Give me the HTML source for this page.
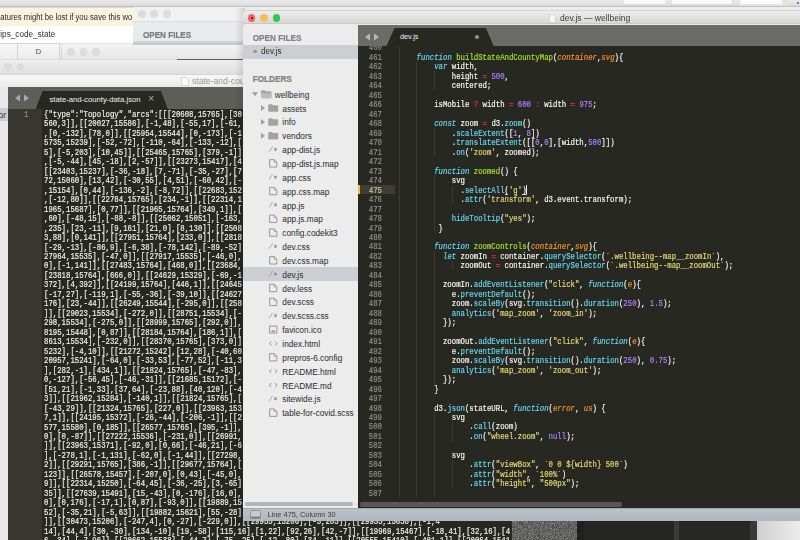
<!DOCTYPE html><html><head><meta charset="utf-8"><style>html,body{margin:0;padding:0;}body{width:800px;height:540px;overflow:hidden;position:relative;background:#ececec;}</style></head><body><div style="position:absolute;left:0px;top:0px;width:800px;height:7px;background:linear-gradient(#e9e9e9 0%,#e4e4e4 40%,#d6d6d6 90%);"></div>
<div style="position:absolute;left:739px;top:0px;width:49px;height:7px;background:#e3e3e3;"></div>
<div style="position:absolute;left:624px;top:0px;width:41px;height:3.5px;background:#fafafa;"></div>
<div style="position:absolute;left:672px;top:0px;width:61px;height:3.5px;background:#fafafa;"></div>
<div style="position:absolute;left:740px;top:0px;width:42px;height:3.5px;background:#fafafa;"></div>
<div style="position:absolute;left:732px;top:0px;width:1px;height:7px;background:#d6d6d6;"></div>
<div style="position:absolute;left:797px;top:2px;width:2px;height:2px;background:#4a90b8;"></div>
<div style="position:absolute;left:797px;top:5.5px;width:2px;height:1.5px;background:#4a90b8;"></div>
<div style="position:absolute;left:133px;top:6.5px;width:667px;height:4px;background:#ededed;"></div>
<div style="position:absolute;left:0px;top:5.8px;width:800px;height:1px;background:#c4c2bc;"></div>
<div style="position:absolute;left:0px;top:6.5px;width:133px;height:19.5px;background:#fcf3df;border-top:1px solid #e2dccc;box-sizing:border-box;"></div>
<div style="position:absolute;left:0.3px;top:11.5px;white-space:pre;font-family:'Liberation Sans',sans-serif;font-size:7.7px;line-height:12px;color:#2a2a2a;transform:scaleY(1.12);transform-origin:0 60%;">atures might be lost if you save this wo</div>
<div style="position:absolute;left:0px;top:26px;width:133px;height:17px;background:#ffffff;"></div>
<div style="position:absolute;left:-2px;top:29.1px;white-space:pre;font-family:'Liberation Sans',sans-serif;font-size:8.2px;line-height:12px;color:#303030;transform:scaleY(1.08);transform-origin:0 60%;">fips_code_state</div>
<div style="position:absolute;left:0px;top:42.5px;width:62px;height:1.5px;background:#d4d4d4;"></div>
<div style="position:absolute;left:0px;top:44px;width:62px;height:15.5px;background:linear-gradient(#f7f7f7,#ebebeb);"></div>
<div style="position:absolute;left:17px;top:44px;width:1px;height:15.5px;background:#d2d2d2;"></div>
<div style="position:absolute;left:58.5px;top:44px;width:1px;height:15.5px;background:#d2d2d2;"></div>
<div style="position:absolute;left:35.5px;top:46.5px;white-space:pre;font-family:'Liberation Sans',sans-serif;font-size:8px;line-height:10px;color:#555;">D</div>
<div style="position:absolute;left:62px;top:44px;width:181px;height:15.5px;background:linear-gradient(#f4f4f4,#e6e6e6);border-top-left-radius:4px;box-shadow:-1px 0 1.5px rgba(0,0,0,0.12);"></div>
<div style="position:absolute;left:67.2px;top:48.2px;width:7.6px;height:7.6px;border-radius:50%;background:#dcdcdc;"></div>
<div style="position:absolute;left:79.7px;top:48.2px;width:7.6px;height:7.6px;border-radius:50%;background:#dcdcdc;"></div>
<div style="position:absolute;left:92.2px;top:48.2px;width:7.6px;height:7.6px;border-radius:50%;background:#dcdcdc;"></div>
<div style="position:absolute;left:0px;top:58.5px;width:243px;height:1.5px;background:linear-gradient(#e2e2e2,#d4d4d4);"></div>
<div style="position:absolute;left:177px;top:59px;width:66px;height:1px;background:#5c5c5c;"></div>
<div style="position:absolute;left:133px;top:7px;width:110px;height:37.5px;background:#e9eaec;border-top-left-radius:4px;"></div>
<div style="position:absolute;left:133px;top:7px;width:110px;height:13.5px;background:#f1f1f1;border-top-left-radius:4px;border-bottom:1px solid #dddddd;"></div>
<div style="position:absolute;left:137.79999999999998px;top:10.1px;width:7.8px;height:7.8px;border-radius:50%;background:#dcdcdc;"></div>
<div style="position:absolute;left:150.29999999999998px;top:10.1px;width:7.8px;height:7.8px;border-radius:50%;background:#dcdcdc;"></div>
<div style="position:absolute;left:162.9px;top:10.1px;width:7.8px;height:7.8px;border-radius:50%;background:#dcdcdc;"></div>
<div style="position:absolute;left:143px;top:32px;white-space:pre;font-family:'Liberation Sans',sans-serif;font-size:8.1px;line-height:8px;font-weight:bold;color:#7a7a7a;transform:scaleY(1.15);transform-origin:0 70%;-webkit-text-stroke:0.2px #7a7a7a;">OPEN FILES</div>
<div style="position:absolute;left:133px;top:41px;width:110px;height:3.5px;background:linear-gradient(#d5d7da,#c3c6ca);"></div>
<div style="position:absolute;left:0px;top:60px;width:243px;height:13.5px;background:linear-gradient(#efefef,#dfdfdf);"></div>
<div style="position:absolute;left:4.0px;top:63.2px;width:7.6px;height:7.6px;border-radius:50%;background:#dcdcdc;"></div>
<div style="position:absolute;left:16.599999999999998px;top:63.2px;width:7.6px;height:7.6px;border-radius:50%;background:#dcdcdc;"></div>
<div style="position:absolute;left:0px;top:73.5px;width:243px;height:13.5px;background:linear-gradient(#f7f7f7,#ececec);border-top:1px solid #d6d6d6;box-sizing:border-box;"></div>
<svg style="position:absolute;left:181px;top:77px" width="8" height="9" viewBox="0 0 8 9"><path d="M0.5 0.5 H5 L7.5 3 V8.5 H0.5 Z" fill="#fbfbfb" stroke="#cfcfcf" stroke-width="0.8"/></svg>
<div style="position:absolute;left:192px;top:76px;white-space:pre;font-family:'Liberation Sans',sans-serif;font-size:8.6px;line-height:10px;color:#9a9a9a;">state-and-county-data.json</div>
<div style="position:absolute;left:0px;top:87px;width:8px;height:453px;background:#e8e8e8;"></div>
<div style="position:absolute;left:0px;top:108px;width:8px;height:13px;background:#cacdd2;"></div>
<div style="position:absolute;left:-1.5px;top:109.5px;white-space:pre;font-family:'Liberation Sans',sans-serif;font-size:8.5px;line-height:10px;color:#333;">or</div>
<div style="position:absolute;left:8px;top:87px;width:504px;height:453px;background:#272822;"></div>
<div style="position:absolute;left:8px;top:87px;width:504px;height:21.8px;background:#5d5e59;"></div>
<svg style="position:absolute;left:14px;top:94px" width="16" height="8" viewBox="0 0 16 8"><path d="M6 0.5 L1 4 L6 7.5 Z" fill="#a9a9a6"/><path d="M10 0.5 L15 4 L10 7.5 Z" fill="#a9a9a6"/></svg>
<svg style="position:absolute;left:35px;top:91px" width="134" height="18" viewBox="0 0 134 18"><path d="M0.5 18.5 L7.5 0 H126 L133 18.5 Z" fill="#272822"/></svg>
<div style="position:absolute;left:49.5px;top:95px;white-space:pre;font-family:'Liberation Sans',sans-serif;font-size:7.7px;line-height:10px;color:#f2f2f2;">state-and-county-data.json</div>
<div style="position:absolute;left:148.3px;top:94.3px;white-space:pre;font-family:'Liberation Sans',sans-serif;font-size:10px;line-height:10px;color:#b0b0ac;">×</div>
<div style="position:absolute;left:8px;top:109px;width:33.5px;height:431px;background:#38372f;"></div>
<div style="position:absolute;left:24px;top:110.86999999999999px;font-family:'Liberation Mono',monospace;font-size:7.33px;line-height:9.46px;white-space:pre;color:#8f908a;transform:scaleY(1.15);transform-origin:0 70%;will-change:transform;-webkit-text-stroke:0.15px currentColor;">1</div>
<div style="position:absolute;left:44px;top:110.86999999999999px;font-family:'Liberation Mono',monospace;font-size:7.33px;line-height:9.46px;white-space:pre;color:#f2f2ec;transform:scaleY(1.15);transform-origin:0 70%;will-change:transform;-webkit-text-stroke:0.15px currentColor;">{&quot;type&quot;:&quot;Topology&quot;,&quot;arcs&quot;:[[[20608,15765],[30</div>
<div style="position:absolute;left:44px;top:120.34499999999998px;font-family:'Liberation Mono',monospace;font-size:7.33px;line-height:9.46px;white-space:pre;color:#f2f2ec;transform:scaleY(1.15);transform-origin:0 70%;will-change:transform;-webkit-text-stroke:0.15px currentColor;">560,3]],[[20027,15586],[-1,48],[-55,17],[-61,</div>
<div style="position:absolute;left:44px;top:129.82000000000002px;font-family:'Liberation Mono',monospace;font-size:7.33px;line-height:9.46px;white-space:pre;color:#f2f2ec;transform:scaleY(1.15);transform-origin:0 70%;will-change:transform;-webkit-text-stroke:0.15px currentColor;">,[0,-132],[78,0]],[[25954,15544],[0,-173],[-1</div>
<div style="position:absolute;left:44px;top:139.29500000000002px;font-family:'Liberation Mono',monospace;font-size:7.33px;line-height:9.46px;white-space:pre;color:#f2f2ec;transform:scaleY(1.15);transform-origin:0 70%;will-change:transform;-webkit-text-stroke:0.15px currentColor;">5735,15239],[-52,-72],[-110,-64],[-133,-12],[</div>
<div style="position:absolute;left:44px;top:148.77px;font-family:'Liberation Mono',monospace;font-size:7.33px;line-height:9.46px;white-space:pre;color:#f2f2ec;transform:scaleY(1.15);transform-origin:0 70%;will-change:transform;-webkit-text-stroke:0.15px currentColor;">5],[-5,203],[10,45]],[[25465,15765],[379,-1]]</div>
<div style="position:absolute;left:44px;top:158.24500000000003px;font-family:'Liberation Mono',monospace;font-size:7.33px;line-height:9.46px;white-space:pre;color:#f2f2ec;transform:scaleY(1.15);transform-origin:0 70%;will-change:transform;-webkit-text-stroke:0.15px currentColor;">,[-5,-44],[45,-18],[2,-57]],[[23273,15417],[4</div>
<div style="position:absolute;left:44px;top:167.72px;font-family:'Liberation Mono',monospace;font-size:7.33px;line-height:9.46px;white-space:pre;color:#f2f2ec;transform:scaleY(1.15);transform-origin:0 70%;will-change:transform;-webkit-text-stroke:0.15px currentColor;">[[23403,15237],[-36,-18],[7,-71],[-35,-27],[7</div>
<div style="position:absolute;left:44px;top:177.19500000000002px;font-family:'Liberation Mono',monospace;font-size:7.33px;line-height:9.46px;white-space:pre;color:#f2f2ec;transform:scaleY(1.15);transform-origin:0 70%;will-change:transform;-webkit-text-stroke:0.15px currentColor;">72,15060],[13,42],[-30,55],[4,51],[-60,42],[-</div>
<div style="position:absolute;left:44px;top:186.67000000000002px;font-family:'Liberation Mono',monospace;font-size:7.33px;line-height:9.46px;white-space:pre;color:#f2f2ec;transform:scaleY(1.15);transform-origin:0 70%;will-change:transform;-webkit-text-stroke:0.15px currentColor;">,15154],[0,44],[-136,-2],[-8,72]],[[22683,152</div>
<div style="position:absolute;left:44px;top:196.145px;font-family:'Liberation Mono',monospace;font-size:7.33px;line-height:9.46px;white-space:pre;color:#f2f2ec;transform:scaleY(1.15);transform-origin:0 70%;will-change:transform;-webkit-text-stroke:0.15px currentColor;">,[-12,80]],[[22784,15765],[234,-1]],[[22314,1</div>
<div style="position:absolute;left:44px;top:205.62000000000003px;font-family:'Liberation Mono',monospace;font-size:7.33px;line-height:9.46px;white-space:pre;color:#f2f2ec;transform:scaleY(1.15);transform-origin:0 70%;will-change:transform;-webkit-text-stroke:0.15px currentColor;">1965,15687],[0,77]],[[21965,15764],[349,1]],[</div>
<div style="position:absolute;left:44px;top:215.095px;font-family:'Liberation Mono',monospace;font-size:7.33px;line-height:9.46px;white-space:pre;color:#f2f2ec;transform:scaleY(1.15);transform-origin:0 70%;will-change:transform;-webkit-text-stroke:0.15px currentColor;">,60],[-48,15],[-88,-8]],[[25062,15051],[-163,</div>
<div style="position:absolute;left:44px;top:224.57000000000002px;font-family:'Liberation Mono',monospace;font-size:7.33px;line-height:9.46px;white-space:pre;color:#f2f2ec;transform:scaleY(1.15);transform-origin:0 70%;will-change:transform;-webkit-text-stroke:0.15px currentColor;">,235],[23,-11],[9,161],[21,0],[8,130]],[[2508</div>
<div style="position:absolute;left:44px;top:234.04500000000002px;font-family:'Liberation Mono',monospace;font-size:7.33px;line-height:9.46px;white-space:pre;color:#f2f2ec;transform:scaleY(1.15);transform-origin:0 70%;will-change:transform;-webkit-text-stroke:0.15px currentColor;">3,88],[0,141]],[[27951,15764],[233,0]],[[2818</div>
<div style="position:absolute;left:44px;top:243.52px;font-family:'Liberation Mono',monospace;font-size:7.33px;line-height:9.46px;white-space:pre;color:#f2f2ec;transform:scaleY(1.15);transform-origin:0 70%;will-change:transform;-webkit-text-stroke:0.15px currentColor;">[-29,-13],[-86,9],[-6,38],[-78,142],[-89,-52]</div>
<div style="position:absolute;left:44px;top:252.99500000000003px;font-family:'Liberation Mono',monospace;font-size:7.33px;line-height:9.46px;white-space:pre;color:#f2f2ec;transform:scaleY(1.15);transform-origin:0 70%;will-change:transform;-webkit-text-stroke:0.15px currentColor;">27964,15535],[-47,0]],[[27917,15535],[-46,0],</div>
<div style="position:absolute;left:44px;top:262.46999999999997px;font-family:'Liberation Mono',monospace;font-size:7.33px;line-height:9.46px;white-space:pre;color:#f2f2ec;transform:scaleY(1.15);transform-origin:0 70%;will-change:transform;-webkit-text-stroke:0.15px currentColor;">0],[-1,141]],[[27483,15764],[468,0]],[[23684,</div>
<div style="position:absolute;left:44px;top:271.945px;font-family:'Liberation Mono',monospace;font-size:7.33px;line-height:9.46px;white-space:pre;color:#f2f2ec;transform:scaleY(1.15);transform-origin:0 70%;will-change:transform;-webkit-text-stroke:0.15px currentColor;">[23818,15764],[666,0]],[[24629,15329],[-69,-1</div>
<div style="position:absolute;left:44px;top:281.41999999999996px;font-family:'Liberation Mono',monospace;font-size:7.33px;line-height:9.46px;white-space:pre;color:#f2f2ec;transform:scaleY(1.15);transform-origin:0 70%;will-change:transform;-webkit-text-stroke:0.15px currentColor;">372],[4,392]],[[24199,15764],[446,1]],[[24645</div>
<div style="position:absolute;left:44px;top:290.895px;font-family:'Liberation Mono',monospace;font-size:7.33px;line-height:9.46px;white-space:pre;color:#f2f2ec;transform:scaleY(1.15);transform-origin:0 70%;will-change:transform;-webkit-text-stroke:0.15px currentColor;">[-17,27],[-119,1],[-55,-36],[-39,10]],[[24627</div>
<div style="position:absolute;left:44px;top:300.37px;font-family:'Liberation Mono',monospace;font-size:7.33px;line-height:9.46px;white-space:pre;color:#f2f2ec;transform:scaleY(1.15);transform-origin:0 70%;will-change:transform;-webkit-text-stroke:0.15px currentColor;">176],[23,-44]],[[26249,15544],[-295,0]],[[258</div>
<div style="position:absolute;left:44px;top:309.84499999999997px;font-family:'Liberation Mono',monospace;font-size:7.33px;line-height:9.46px;white-space:pre;color:#f2f2ec;transform:scaleY(1.15);transform-origin:0 70%;will-change:transform;-webkit-text-stroke:0.15px currentColor;">]],[[29023,15534],[-272,0]],[[28751,15534],[-</div>
<div style="position:absolute;left:44px;top:319.32px;font-family:'Liberation Mono',monospace;font-size:7.33px;line-height:9.46px;white-space:pre;color:#f2f2ec;transform:scaleY(1.15);transform-origin:0 70%;will-change:transform;-webkit-text-stroke:0.15px currentColor;">298,15534],[-275,0]],[[28999,15765],[292,0]],[</div>
<div style="position:absolute;left:44px;top:328.79499999999996px;font-family:'Liberation Mono',monospace;font-size:7.33px;line-height:9.46px;white-space:pre;color:#f2f2ec;transform:scaleY(1.15);transform-origin:0 70%;will-change:transform;-webkit-text-stroke:0.15px currentColor;">8195,15448],[0,87]],[[28184,15764],[186,1]],[</div>
<div style="position:absolute;left:44px;top:338.27px;font-family:'Liberation Mono',monospace;font-size:7.33px;line-height:9.46px;white-space:pre;color:#f2f2ec;transform:scaleY(1.15);transform-origin:0 70%;will-change:transform;-webkit-text-stroke:0.15px currentColor;">8613,15534],[-232,0]],[[28370,15765],[373,0]]</div>
<div style="position:absolute;left:44px;top:347.745px;font-family:'Liberation Mono',monospace;font-size:7.33px;line-height:9.46px;white-space:pre;color:#f2f2ec;transform:scaleY(1.15);transform-origin:0 70%;will-change:transform;-webkit-text-stroke:0.15px currentColor;">5232],[-4,10]],[[21272,15242],[12,28],[-40,60</div>
<div style="position:absolute;left:44px;top:357.21999999999997px;font-family:'Liberation Mono',monospace;font-size:7.33px;line-height:9.46px;white-space:pre;color:#f2f2ec;transform:scaleY(1.15);transform-origin:0 70%;will-change:transform;-webkit-text-stroke:0.15px currentColor;">20957,15241],[-64,0],[-33,53],[-77,52],[-11,3</div>
<div style="position:absolute;left:44px;top:366.695px;font-family:'Liberation Mono',monospace;font-size:7.33px;line-height:9.46px;white-space:pre;color:#f2f2ec;transform:scaleY(1.15);transform-origin:0 70%;will-change:transform;-webkit-text-stroke:0.15px currentColor;">],[282,-1],[434,1]],[[21824,15765],[-47,-83],[</div>
<div style="position:absolute;left:44px;top:376.17px;font-family:'Liberation Mono',monospace;font-size:7.33px;line-height:9.46px;white-space:pre;color:#f2f2ec;transform:scaleY(1.15);transform-origin:0 70%;will-change:transform;-webkit-text-stroke:0.15px currentColor;">0,-127],[-56,45],[-46,-31]],[[21685,15172],[-</div>
<div style="position:absolute;left:44px;top:385.645px;font-family:'Liberation Mono',monospace;font-size:7.33px;line-height:9.46px;white-space:pre;color:#f2f2ec;transform:scaleY(1.15);transform-origin:0 70%;will-change:transform;-webkit-text-stroke:0.15px currentColor;">[51,21],[-1,33],[37,64],[-23,88],[40,120],[-4</div>
<div style="position:absolute;left:44px;top:395.12px;font-family:'Liberation Mono',monospace;font-size:7.33px;line-height:9.46px;white-space:pre;color:#f2f2ec;transform:scaleY(1.15);transform-origin:0 70%;will-change:transform;-webkit-text-stroke:0.15px currentColor;">3]],[[21962,15284],[-140,1]],[[21824,15765],[</div>
<div style="position:absolute;left:44px;top:404.59499999999997px;font-family:'Liberation Mono',monospace;font-size:7.33px;line-height:9.46px;white-space:pre;color:#f2f2ec;transform:scaleY(1.15);transform-origin:0 70%;will-change:transform;-webkit-text-stroke:0.15px currentColor;">[-43,29]],[[21324,15765],[227,0]],[[23963,153</div>
<div style="position:absolute;left:44px;top:414.07px;font-family:'Liberation Mono',monospace;font-size:7.33px;line-height:9.46px;white-space:pre;color:#f2f2ec;transform:scaleY(1.15);transform-origin:0 70%;will-change:transform;-webkit-text-stroke:0.15px currentColor;">7,1]],[[24195,15372],[-26,-44],[-206,-1]],[[2</div>
<div style="position:absolute;left:44px;top:423.545px;font-family:'Liberation Mono',monospace;font-size:7.33px;line-height:9.46px;white-space:pre;color:#f2f2ec;transform:scaleY(1.15);transform-origin:0 70%;will-change:transform;-webkit-text-stroke:0.15px currentColor;">577,15580],[0,185]],[[26577,15765],[395,-1]],</div>
<div style="position:absolute;left:44px;top:433.02px;font-family:'Liberation Mono',monospace;font-size:7.33px;line-height:9.46px;white-space:pre;color:#f2f2ec;transform:scaleY(1.15);transform-origin:0 70%;will-change:transform;-webkit-text-stroke:0.15px currentColor;">0],[0,-87]],[[27222,15536],[-231,0]],[[26991,</div>
<div style="position:absolute;left:44px;top:442.495px;font-family:'Liberation Mono',monospace;font-size:7.33px;line-height:9.46px;white-space:pre;color:#f2f2ec;transform:scaleY(1.15);transform-origin:0 70%;will-change:transform;-webkit-text-stroke:0.15px currentColor;">]],[[23963,15371],[-92,0],[0,66],[-46,21],[-6</div>
<div style="position:absolute;left:44px;top:451.96999999999997px;font-family:'Liberation Mono',monospace;font-size:7.33px;line-height:9.46px;white-space:pre;color:#f2f2ec;transform:scaleY(1.15);transform-origin:0 70%;will-change:transform;-webkit-text-stroke:0.15px currentColor;">],[-278,1],[-1,131],[-62,0],[-1,44]],[[27298,</div>
<div style="position:absolute;left:44px;top:461.445px;font-family:'Liberation Mono',monospace;font-size:7.33px;line-height:9.46px;white-space:pre;color:#f2f2ec;transform:scaleY(1.15);transform-origin:0 70%;will-change:transform;-webkit-text-stroke:0.15px currentColor;">2]],[[29291,15765],[386,-1]],[[29677,15764],[</div>
<div style="position:absolute;left:44px;top:470.92px;font-family:'Liberation Mono',monospace;font-size:7.33px;line-height:9.46px;white-space:pre;color:#f2f2ec;transform:scaleY(1.15);transform-origin:0 70%;will-change:transform;-webkit-text-stroke:0.15px currentColor;">123]],[[26578,15457],[-207,0],[0,43],[-45,0],</div>
<div style="position:absolute;left:44px;top:480.395px;font-family:'Liberation Mono',monospace;font-size:7.33px;line-height:9.46px;white-space:pre;color:#f2f2ec;transform:scaleY(1.15);transform-origin:0 70%;will-change:transform;-webkit-text-stroke:0.15px currentColor;">9]],[[22314,15250],[-64,45],[-36,-25],[3,-65]</div>
<div style="position:absolute;left:44px;top:489.87px;font-family:'Liberation Mono',monospace;font-size:7.33px;line-height:9.46px;white-space:pre;color:#f2f2ec;transform:scaleY(1.15);transform-origin:0 70%;will-change:transform;-webkit-text-stroke:0.15px currentColor;">35]],[[27639,15491],[15,-43],[0,-176],[16,0],</div>
<div style="position:absolute;left:44px;top:499.34499999999997px;font-family:'Liberation Mono',monospace;font-size:7.33px;line-height:9.46px;white-space:pre;color:#f2f2ec;transform:scaleY(1.15);transform-origin:0 70%;will-change:transform;-webkit-text-stroke:0.15px currentColor;">0],[0,176],[-17,1],[0,87],[-93,0]],[[19889,15</div>
<div style="position:absolute;left:44px;top:508.82px;font-family:'Liberation Mono',monospace;font-size:7.33px;line-height:9.46px;white-space:pre;color:#f2f2ec;transform:scaleY(1.15);transform-origin:0 70%;will-change:transform;-webkit-text-stroke:0.15px currentColor;">52],[-35,21],[-5,63]],[[19882,15621],[55,-28]</div>
<div style="position:absolute;left:44px;top:518.295px;font-family:'Liberation Mono',monospace;font-size:7.33px;line-height:9.46px;white-space:pre;color:#f2f2ec;transform:scaleY(1.15);transform-origin:0 70%;will-change:transform;-webkit-text-stroke:0.15px currentColor;">]],[[30473,15206],[-247,4],[0,-27],[-229,0]],[[29955,15206],[-5,203]],[[29955,15638],[-1,4</div>
<div style="position:absolute;left:44px;top:527.7699999999999px;font-family:'Liberation Mono',monospace;font-size:7.33px;line-height:9.46px;white-space:pre;color:#f2f2ec;transform:scaleY(1.15);transform-origin:0 70%;will-change:transform;-webkit-text-stroke:0.15px currentColor;">14],[44,4],[30,-30],[134,-10],[19,-58],[115,16],[1,22],[92,26],[42,-7]],[[19969,15467],[-18,41],[32,16],[4</div>
<div style="position:absolute;left:44px;top:537.2449999999999px;font-family:'Liberation Mono',monospace;font-size:7.33px;line-height:9.46px;white-space:pre;color:#f2f2ec;transform:scaleY(1.15);transform-origin:0 70%;will-change:transform;-webkit-text-stroke:0.15px currentColor;">6,-34],[-7,96]],[[20662,15538],[-44,7],[-75,-25],[-12,-80],[34,-11]],[[20555,15410],[-401,1]],[[20064,1541</div>
<div style="position:absolute;left:512px;top:521px;width:65px;height:19px;background:#4b4b49;"></div>
<svg style="position:absolute;left:512px;top:521px" width="65" height="19"><filter id="nz"><feTurbulence type="fractalNoise" baseFrequency="1.2" numOctaves="1" seed="3"/><feColorMatrix type="matrix" values="0 0 0 0 0.5  0 0 0 0 0.5  0 0 0 0 0.5  0.9 0.9 0.9 0 -1.15"/></filter><rect width="65" height="19" filter="url(#nz)"/></svg>
<div style="position:absolute;left:577px;top:521px;width:180px;height:19px;background:#20211e;"></div>
<div style="position:absolute;left:584px;top:522px;width:90px;height:18px;background:#262723;"></div>
<div style="position:absolute;left:674px;top:521px;width:5px;height:19px;background:#3a3a37;"></div>
<div style="position:absolute;left:679px;top:522px;width:71px;height:18px;background:#272824;"></div>
<div style="position:absolute;left:750px;top:521px;width:7px;height:19px;background:#3a3a38;"></div>
<div style="position:absolute;left:757px;top:521px;width:43px;height:19px;background:linear-gradient(90deg,#cfcfcf,#ececec);"></div>
<div style="position:absolute;left:235px;top:8px;width:10px;height:515px;background:linear-gradient(90deg,rgba(0,0,0,0),rgba(0,0,0,0.12));"></div>
<div style="position:absolute;left:243px;top:10.3px;width:557px;height:14.2px;background:linear-gradient(#ededed,#d8d8d8);border-top-left-radius:4px;border-top:0.8px solid #d2d2d2;border-bottom:1px solid #c9c9c9;box-sizing:border-box;"></div>
<div style="position:absolute;left:247.6px;top:13.999999999999998px;width:7.8px;height:7.8px;border-radius:50%;background:#fc605c;"></div>
<div style="position:absolute;left:250.6px;top:16.6px;width:2.0px;height:2.0px;border-radius:50%;background:#5a0c0c;"></div>
<div style="position:absolute;left:260.1px;top:13.999999999999998px;width:7.8px;height:7.8px;border-radius:50%;background:#f7bf4f;"></div>
<div style="position:absolute;left:272.6px;top:13.999999999999998px;width:7.8px;height:7.8px;border-radius:50%;background:#35c84a;"></div>
<svg style="position:absolute;left:548.5px;top:14px" width="7" height="9" viewBox="0 0 7 9"><path d="M0.5 0.5 H4.5 L6.5 2.5 V8.5 H0.5 Z" fill="#f8f8f8" stroke="#c8c8c8" stroke-width="0.7"/></svg>
<div style="position:absolute;left:560px;top:13.3px;white-space:pre;font-family:'Liberation Sans',sans-serif;font-size:8.5px;line-height:10px;color:#3c3c3c;">dev.js — wellbeing</div>
<div style="position:absolute;left:243px;top:24.5px;width:115px;height:484px;background:#ececed;"></div>
<div style="position:absolute;left:252.7px;top:34.5px;white-space:pre;font-family:'Liberation Sans',sans-serif;font-size:8.2px;line-height:8px;font-weight:bold;color:#828282;transform:scaleY(1.15);transform-origin:0 70%;-webkit-text-stroke:0.2px #828282;">OPEN FILES</div>
<div style="position:absolute;left:243px;top:45px;width:115px;height:13.5px;background:#cbced3;"></div>
<div style="position:absolute;left:253.3px;top:50.099999999999994px;width:3.4px;height:3.4px;border-radius:50%;background:#959595;"></div>
<div style="position:absolute;left:261px;top:47px;white-space:pre;font-family:'Liberation Sans',sans-serif;font-size:8.1px;line-height:10px;color:#2b2b2b;transform:scaleY(1.06);transform-origin:0 60%;">dev.js</div>
<div style="position:absolute;left:252.7px;top:76px;white-space:pre;font-family:'Liberation Sans',sans-serif;font-size:8.2px;line-height:8px;font-weight:bold;color:#828282;transform:scaleY(1.15);transform-origin:0 70%;-webkit-text-stroke:0.2px #828282;">FOLDERS</div>
<div style="position:absolute;left:274.7px;top:89.7px;white-space:pre;font-family:'Liberation Sans',sans-serif;font-size:8.3px;line-height:10px;color:#2b2b2b;transform:scaleY(1.06);transform-origin:0 60%;">wellbeing</div>
<div style="position:absolute;left:282.3px;top:103.55px;white-space:pre;font-family:'Liberation Sans',sans-serif;font-size:8.3px;line-height:10px;color:#2b2b2b;transform:scaleY(1.06);transform-origin:0 60%;">assets</div>
<div style="position:absolute;left:282.3px;top:117.4px;white-space:pre;font-family:'Liberation Sans',sans-serif;font-size:8.3px;line-height:10px;color:#2b2b2b;transform:scaleY(1.06);transform-origin:0 60%;">info</div>
<div style="position:absolute;left:282.3px;top:131.25px;white-space:pre;font-family:'Liberation Sans',sans-serif;font-size:8.3px;line-height:10px;color:#2b2b2b;transform:scaleY(1.06);transform-origin:0 60%;">vendors</div>
<div style="position:absolute;left:282.3px;top:145.1px;white-space:pre;font-family:'Liberation Sans',sans-serif;font-size:8.3px;line-height:10px;color:#2b2b2b;transform:scaleY(1.06);transform-origin:0 60%;">app-dist.js</div>
<div style="position:absolute;left:282.3px;top:158.95px;white-space:pre;font-family:'Liberation Sans',sans-serif;font-size:8.3px;line-height:10px;color:#2b2b2b;transform:scaleY(1.06);transform-origin:0 60%;">app-dist.js.map</div>
<div style="position:absolute;left:282.3px;top:172.8px;white-space:pre;font-family:'Liberation Sans',sans-serif;font-size:8.3px;line-height:10px;color:#2b2b2b;transform:scaleY(1.06);transform-origin:0 60%;">app.css</div>
<div style="position:absolute;left:282.3px;top:186.65px;white-space:pre;font-family:'Liberation Sans',sans-serif;font-size:8.3px;line-height:10px;color:#2b2b2b;transform:scaleY(1.06);transform-origin:0 60%;">app.css.map</div>
<div style="position:absolute;left:282.3px;top:200.5px;white-space:pre;font-family:'Liberation Sans',sans-serif;font-size:8.3px;line-height:10px;color:#2b2b2b;transform:scaleY(1.06);transform-origin:0 60%;">app.js</div>
<div style="position:absolute;left:282.3px;top:214.35px;white-space:pre;font-family:'Liberation Sans',sans-serif;font-size:8.3px;line-height:10px;color:#2b2b2b;transform:scaleY(1.06);transform-origin:0 60%;">app.js.map</div>
<div style="position:absolute;left:282.3px;top:228.2px;white-space:pre;font-family:'Liberation Sans',sans-serif;font-size:8.3px;line-height:10px;color:#2b2b2b;transform:scaleY(1.06);transform-origin:0 60%;">config.codekit3</div>
<div style="position:absolute;left:282.3px;top:242.05px;white-space:pre;font-family:'Liberation Sans',sans-serif;font-size:8.3px;line-height:10px;color:#2b2b2b;transform:scaleY(1.06);transform-origin:0 60%;">dev.css</div>
<div style="position:absolute;left:282.3px;top:255.89999999999998px;white-space:pre;font-family:'Liberation Sans',sans-serif;font-size:8.3px;line-height:10px;color:#2b2b2b;transform:scaleY(1.06);transform-origin:0 60%;">dev.css.map</div>
<div style="position:absolute;left:243px;top:267.45px;width:115px;height:13.5px;background:#cbced3;"></div>
<div style="position:absolute;left:282.3px;top:269.75px;white-space:pre;font-family:'Liberation Sans',sans-serif;font-size:8.3px;line-height:10px;color:#2b2b2b;transform:scaleY(1.06);transform-origin:0 60%;">dev.js</div>
<div style="position:absolute;left:282.3px;top:283.6px;white-space:pre;font-family:'Liberation Sans',sans-serif;font-size:8.3px;line-height:10px;color:#2b2b2b;transform:scaleY(1.06);transform-origin:0 60%;">dev.less</div>
<div style="position:absolute;left:282.3px;top:297.45px;white-space:pre;font-family:'Liberation Sans',sans-serif;font-size:8.3px;line-height:10px;color:#2b2b2b;transform:scaleY(1.06);transform-origin:0 60%;">dev.scss</div>
<div style="position:absolute;left:282.3px;top:311.3px;white-space:pre;font-family:'Liberation Sans',sans-serif;font-size:8.3px;line-height:10px;color:#2b2b2b;transform:scaleY(1.06);transform-origin:0 60%;">dev.scss.css</div>
<div style="position:absolute;left:282.3px;top:325.15px;white-space:pre;font-family:'Liberation Sans',sans-serif;font-size:8.3px;line-height:10px;color:#2b2b2b;transform:scaleY(1.06);transform-origin:0 60%;">favicon.ico</div>
<div style="position:absolute;left:282.3px;top:339.0px;white-space:pre;font-family:'Liberation Sans',sans-serif;font-size:8.3px;line-height:10px;color:#2b2b2b;transform:scaleY(1.06);transform-origin:0 60%;">index.html</div>
<div style="position:absolute;left:282.3px;top:352.84999999999997px;white-space:pre;font-family:'Liberation Sans',sans-serif;font-size:8.3px;line-height:10px;color:#2b2b2b;transform:scaleY(1.06);transform-origin:0 60%;">prepros-6.config</div>
<div style="position:absolute;left:282.3px;top:366.7px;white-space:pre;font-family:'Liberation Sans',sans-serif;font-size:8.3px;line-height:10px;color:#2b2b2b;transform:scaleY(1.06);transform-origin:0 60%;">README.html</div>
<div style="position:absolute;left:282.3px;top:380.54999999999995px;white-space:pre;font-family:'Liberation Sans',sans-serif;font-size:8.3px;line-height:10px;color:#2b2b2b;transform:scaleY(1.06);transform-origin:0 60%;">README.md</div>
<div style="position:absolute;left:282.3px;top:394.4px;white-space:pre;font-family:'Liberation Sans',sans-serif;font-size:8.3px;line-height:10px;color:#2b2b2b;transform:scaleY(1.06);transform-origin:0 60%;">sitewide.js</div>
<div style="position:absolute;left:282.3px;top:408.25px;white-space:pre;font-family:'Liberation Sans',sans-serif;font-size:8.3px;line-height:10px;color:#2b2b2b;transform:scaleY(1.06);transform-origin:0 60%;">table-for-covid.scss</div>
<svg style="position:absolute;left:0;top:0" width="800" height="540" viewBox="0 0 800 540"><path d="M252 92.2 H258 L255 96.2 Z" fill="#a0a0a0"/><path d="M261 91.2 Q261 90.2 262 90.2 H264.8 L265.8 91.2 H270.5 Q271.5 91.2 271.5 92.2 V97.4 Q271.5 98.2 270.5 98.2 H262 Q261 98.2 261 97.4 Z" fill="#a6a6a6"/><path d="M261 93.2 H271.5 V97.4 Q271.5 98.2 270.5 98.2 H262 Q261 98.2 261 97.4 Z" fill="#bdbdbd"/><path d="M261 105.05 V111.05 L265 108.05 Z" fill="#a0a0a0"/><path d="M268.2 105.3 Q268.2 104.3 269.2 104.3 H272.0 L273.0 105.3 H277.2 Q278.2 105.3 278.2 106.3 V111.0 Q278.2 111.8 277.2 111.8 H269.2 Q268.2 111.8 268.2 111.0 Z" fill="#a2a2a2"/><path d="M261 118.9 V124.9 L265 121.9 Z" fill="#a0a0a0"/><path d="M268.2 119.15 Q268.2 118.15 269.2 118.15 H272.0 L273.0 119.15 H277.2 Q278.2 119.15 278.2 120.15 V124.85000000000001 Q278.2 125.65 277.2 125.65 H269.2 Q268.2 125.65 268.2 124.85000000000001 Z" fill="#a2a2a2"/><path d="M261 132.75 V138.75 L265 135.75 Z" fill="#a0a0a0"/><path d="M268.2 133.0 Q268.2 132.0 269.2 132.0 H272.0 L273.0 133.0 H277.2 Q278.2 133.0 278.2 134.0 V138.7 Q278.2 139.5 277.2 139.5 H269.2 Q268.2 139.5 268.2 138.7 Z" fill="#a2a2a2"/><path d="M269.2 151.79999999999998 L272.59999999999997 146.4" stroke="#9a9a9a" stroke-width="0.8" fill="none"/><path d="M273.9 148.4 L277.1 150.4 M273.9 150.4 L277.1 148.4 M275.5 147.8 V151.0" stroke="#8a8a8a" stroke-width="0.8" fill="none"/><path d="M269.65 159.64999999999998 H274.2 L276.8 162.24999999999997 V167.04999999999998 H269.65 Z" fill="none" stroke="#8e8e8e" stroke-width="0.9"/><path d="M274.2 159.64999999999998 V162.24999999999997 H276.8" fill="none" stroke="#8e8e8e" stroke-width="0.7"/><path d="M269.2 179.5 L272.59999999999997 174.10000000000002" stroke="#9a9a9a" stroke-width="0.8" fill="none"/><path d="M273.9 176.10000000000002 L277.1 178.10000000000002 M273.9 178.10000000000002 L277.1 176.10000000000002 M275.5 175.50000000000003 V178.70000000000002" stroke="#8a8a8a" stroke-width="0.8" fill="none"/><path d="M269.65 187.35 H274.2 L276.8 189.95 V194.75 H269.65 Z" fill="none" stroke="#8e8e8e" stroke-width="0.9"/><path d="M274.2 187.35 V189.95 H276.8" fill="none" stroke="#8e8e8e" stroke-width="0.7"/><path d="M269.2 207.2 L272.59999999999997 201.8" stroke="#9a9a9a" stroke-width="0.8" fill="none"/><path d="M273.9 203.8 L277.1 205.8 M273.9 205.8 L277.1 203.8 M275.5 203.20000000000002 V206.4" stroke="#8a8a8a" stroke-width="0.8" fill="none"/><path d="M269.65 215.04999999999998 H274.2 L276.8 217.64999999999998 V222.45 H269.65 Z" fill="none" stroke="#8e8e8e" stroke-width="0.9"/><path d="M274.2 215.04999999999998 V217.64999999999998 H276.8" fill="none" stroke="#8e8e8e" stroke-width="0.7"/><path d="M269.65 228.89999999999998 H274.2 L276.8 231.49999999999997 V236.29999999999998 H269.65 Z" fill="none" stroke="#8e8e8e" stroke-width="0.9"/><path d="M274.2 228.89999999999998 V231.49999999999997 H276.8" fill="none" stroke="#8e8e8e" stroke-width="0.7"/><path d="M269.2 248.75 L272.59999999999997 243.35000000000002" stroke="#9a9a9a" stroke-width="0.8" fill="none"/><path d="M273.9 245.35000000000002 L277.1 247.35000000000002 M273.9 247.35000000000002 L277.1 245.35000000000002 M275.5 244.75000000000003 V247.95000000000002" stroke="#8a8a8a" stroke-width="0.8" fill="none"/><path d="M269.65 256.59999999999997 H274.2 L276.8 259.2 V264.0 H269.65 Z" fill="none" stroke="#8e8e8e" stroke-width="0.9"/><path d="M274.2 256.59999999999997 V259.2 H276.8" fill="none" stroke="#8e8e8e" stroke-width="0.7"/><path d="M269.2 276.45 L272.59999999999997 271.05" stroke="#9a9a9a" stroke-width="0.8" fill="none"/><path d="M273.9 273.05 L277.1 275.05 M273.9 275.05 L277.1 273.05 M275.5 272.45 V275.65000000000003" stroke="#8a8a8a" stroke-width="0.8" fill="none"/><path d="M269.65 284.3 H274.2 L276.8 286.90000000000003 V291.70000000000005 H269.65 Z" fill="none" stroke="#8e8e8e" stroke-width="0.9"/><path d="M274.2 284.3 V286.90000000000003 H276.8" fill="none" stroke="#8e8e8e" stroke-width="0.7"/><path d="M269.65 298.15 H274.2 L276.8 300.75 V305.55 H269.65 Z" fill="none" stroke="#8e8e8e" stroke-width="0.9"/><path d="M274.2 298.15 V300.75 H276.8" fill="none" stroke="#8e8e8e" stroke-width="0.7"/><path d="M269.2 318.0 L272.59999999999997 312.6" stroke="#9a9a9a" stroke-width="0.8" fill="none"/><path d="M273.9 314.6 L277.1 316.6 M273.9 316.6 L277.1 314.6 M275.5 314.0 V317.20000000000005" stroke="#8a8a8a" stroke-width="0.8" fill="none"/><rect x="269.65" y="326.04999999999995" width="7.2" height="7" fill="none" stroke="#8e8e8e" stroke-width="0.9"/><path d="M271.2 331.65 L272.2 330.24999999999994 L273.2 331.04999999999995 L274.2 330.04999999999995 L275.2 331.65 Z" fill="#777"/><path d="M271.4 341.5 L269.5 343.5 L271.4 345.5 M275.0 341.5 L276.9 343.5 L275.0 345.5" stroke="#8a8a8a" stroke-width="0.9" fill="none"/><path d="M269.65 353.54999999999995 H274.2 L276.8 356.15 V360.95 H269.65 Z" fill="none" stroke="#8e8e8e" stroke-width="0.9"/><path d="M274.2 353.54999999999995 V356.15 H276.8" fill="none" stroke="#8e8e8e" stroke-width="0.7"/><path d="M271.4 369.2 L269.5 371.2 L271.4 373.2 M275.0 369.2 L276.9 371.2 L275.0 373.2" stroke="#8a8a8a" stroke-width="0.9" fill="none"/><path d="M271.4 383.04999999999995 L269.5 385.04999999999995 L271.4 387.04999999999995 M275.0 383.04999999999995 L276.9 385.04999999999995 L275.0 387.04999999999995" stroke="#8a8a8a" stroke-width="0.9" fill="none"/><path d="M269.2 401.09999999999997 L272.59999999999997 395.7" stroke="#9a9a9a" stroke-width="0.8" fill="none"/><path d="M273.9 397.7 L277.1 399.7 M273.9 399.7 L277.1 397.7 M275.5 397.09999999999997 V400.3" stroke="#8a8a8a" stroke-width="0.8" fill="none"/><path d="M269.65 408.95 H274.2 L276.8 411.55 V416.35 H269.65 Z" fill="none" stroke="#8e8e8e" stroke-width="0.9"/><path d="M274.2 408.95 V411.55 H276.8" fill="none" stroke="#8e8e8e" stroke-width="0.7"/></svg>
<div style="position:absolute;left:355px;top:501.8px;width:3px;height:4.2px;background:#e4e4e6;"></div>
<div style="position:absolute;left:245px;top:501.8px;width:107.5px;height:4.2px;background:#b4b5b8;border-radius:1.5px;"></div>
<div style="position:absolute;left:358px;top:24.5px;width:442px;height:483px;background:#272822;"></div>
<div style="position:absolute;left:358px;top:184.8125px;width:37px;height:9.475px;background:#3e3d32;"></div>
<div style="position:absolute;left:358px;top:184.8125px;width:2px;height:9.475px;background:#e2c33b;"></div>
<div style="position:absolute;left:398.7px;top:42.6875px;width:1px;height:9.475px;background:#3b3a32;"></div>
<div style="position:absolute;left:398.7px;top:52.1625px;width:1px;height:9.475px;background:#3b3a32;"></div>
<div style="position:absolute;left:398.7px;top:61.6375px;width:1px;height:9.475px;background:#3b3a32;"></div>
<div style="position:absolute;left:416.3px;top:61.6375px;width:1px;height:9.475px;background:#3b3a32;"></div>
<div style="position:absolute;left:398.7px;top:71.1125px;width:1px;height:9.475px;background:#3b3a32;"></div>
<div style="position:absolute;left:416.3px;top:71.1125px;width:1px;height:9.475px;background:#3b3a32;"></div>
<div style="position:absolute;left:433.9px;top:71.1125px;width:1px;height:9.475px;background:#3b3a32;"></div>
<div style="position:absolute;left:398.7px;top:80.58749999999999px;width:1px;height:9.475px;background:#3b3a32;"></div>
<div style="position:absolute;left:416.3px;top:80.58749999999999px;width:1px;height:9.475px;background:#3b3a32;"></div>
<div style="position:absolute;left:433.9px;top:80.58749999999999px;width:1px;height:9.475px;background:#3b3a32;"></div>
<div style="position:absolute;left:398.7px;top:90.0625px;width:1px;height:9.475px;background:#3b3a32;"></div>
<div style="position:absolute;left:416.3px;top:90.0625px;width:1px;height:9.475px;background:#3b3a32;"></div>
<div style="position:absolute;left:398.7px;top:99.53750000000001px;width:1px;height:9.475px;background:#3b3a32;"></div>
<div style="position:absolute;left:416.3px;top:99.53750000000001px;width:1px;height:9.475px;background:#3b3a32;"></div>
<div style="position:absolute;left:398.7px;top:109.0125px;width:1px;height:9.475px;background:#3b3a32;"></div>
<div style="position:absolute;left:416.3px;top:109.0125px;width:1px;height:9.475px;background:#3b3a32;"></div>
<div style="position:absolute;left:398.7px;top:118.4875px;width:1px;height:9.475px;background:#3b3a32;"></div>
<div style="position:absolute;left:416.3px;top:118.4875px;width:1px;height:9.475px;background:#3b3a32;"></div>
<div style="position:absolute;left:398.7px;top:127.96249999999999px;width:1px;height:9.475px;background:#3b3a32;"></div>
<div style="position:absolute;left:416.3px;top:127.96249999999999px;width:1px;height:9.475px;background:#3b3a32;"></div>
<div style="position:absolute;left:433.9px;top:127.96249999999999px;width:1px;height:9.475px;background:#3b3a32;"></div>
<div style="position:absolute;left:398.7px;top:137.43749999999997px;width:1px;height:9.475px;background:#3b3a32;"></div>
<div style="position:absolute;left:416.3px;top:137.43749999999997px;width:1px;height:9.475px;background:#3b3a32;"></div>
<div style="position:absolute;left:433.9px;top:137.43749999999997px;width:1px;height:9.475px;background:#3b3a32;"></div>
<div style="position:absolute;left:398.7px;top:146.9125px;width:1px;height:9.475px;background:#3b3a32;"></div>
<div style="position:absolute;left:416.3px;top:146.9125px;width:1px;height:9.475px;background:#3b3a32;"></div>
<div style="position:absolute;left:433.9px;top:146.9125px;width:1px;height:9.475px;background:#3b3a32;"></div>
<div style="position:absolute;left:398.7px;top:156.3875px;width:1px;height:9.475px;background:#3b3a32;"></div>
<div style="position:absolute;left:416.3px;top:156.3875px;width:1px;height:9.475px;background:#3b3a32;"></div>
<div style="position:absolute;left:398.7px;top:165.86249999999998px;width:1px;height:9.475px;background:#3b3a32;"></div>
<div style="position:absolute;left:416.3px;top:165.86249999999998px;width:1px;height:9.475px;background:#3b3a32;"></div>
<div style="position:absolute;left:398.7px;top:175.33749999999998px;width:1px;height:9.475px;background:#3b3a32;"></div>
<div style="position:absolute;left:416.3px;top:175.33749999999998px;width:1px;height:9.475px;background:#3b3a32;"></div>
<div style="position:absolute;left:433.9px;top:175.33749999999998px;width:1px;height:9.475px;background:#3b3a32;"></div>
<div style="position:absolute;left:398.7px;top:184.8125px;width:1px;height:9.475px;background:#3b3a32;"></div>
<div style="position:absolute;left:416.3px;top:184.8125px;width:1px;height:9.475px;background:#3b3a32;"></div>
<div style="position:absolute;left:433.9px;top:184.8125px;width:1px;height:9.475px;background:#3b3a32;"></div>
<div style="position:absolute;left:451.5px;top:184.8125px;width:1px;height:9.475px;background:#3b3a32;"></div>
<div style="position:absolute;left:398.7px;top:194.2875px;width:1px;height:9.475px;background:#3b3a32;"></div>
<div style="position:absolute;left:416.3px;top:194.2875px;width:1px;height:9.475px;background:#3b3a32;"></div>
<div style="position:absolute;left:433.9px;top:194.2875px;width:1px;height:9.475px;background:#3b3a32;"></div>
<div style="position:absolute;left:451.5px;top:194.2875px;width:1px;height:9.475px;background:#3b3a32;"></div>
<div style="position:absolute;left:398.7px;top:203.7625px;width:1px;height:9.475px;background:#3b3a32;"></div>
<div style="position:absolute;left:416.3px;top:203.7625px;width:1px;height:9.475px;background:#3b3a32;"></div>
<div style="position:absolute;left:433.9px;top:203.7625px;width:1px;height:9.475px;background:#3b3a32;"></div>
<div style="position:absolute;left:398.7px;top:213.23749999999998px;width:1px;height:9.475px;background:#3b3a32;"></div>
<div style="position:absolute;left:416.3px;top:213.23749999999998px;width:1px;height:9.475px;background:#3b3a32;"></div>
<div style="position:absolute;left:433.9px;top:213.23749999999998px;width:1px;height:9.475px;background:#3b3a32;"></div>
<div style="position:absolute;left:398.7px;top:222.71249999999998px;width:1px;height:9.475px;background:#3b3a32;"></div>
<div style="position:absolute;left:416.3px;top:222.71249999999998px;width:1px;height:9.475px;background:#3b3a32;"></div>
<div style="position:absolute;left:433.9px;top:222.71249999999998px;width:1px;height:9.475px;background:#3b3a32;"></div>
<div style="position:absolute;left:398.7px;top:232.1875px;width:1px;height:9.475px;background:#3b3a32;"></div>
<div style="position:absolute;left:416.3px;top:232.1875px;width:1px;height:9.475px;background:#3b3a32;"></div>
<div style="position:absolute;left:398.7px;top:241.6625px;width:1px;height:9.475px;background:#3b3a32;"></div>
<div style="position:absolute;left:416.3px;top:241.6625px;width:1px;height:9.475px;background:#3b3a32;"></div>
<div style="position:absolute;left:398.7px;top:251.1375px;width:1px;height:9.475px;background:#3b3a32;"></div>
<div style="position:absolute;left:416.3px;top:251.1375px;width:1px;height:9.475px;background:#3b3a32;"></div>
<div style="position:absolute;left:433.9px;top:251.1375px;width:1px;height:9.475px;background:#3b3a32;"></div>
<div style="position:absolute;left:398.7px;top:260.61249999999995px;width:1px;height:9.475px;background:#3b3a32;"></div>
<div style="position:absolute;left:416.3px;top:260.61249999999995px;width:1px;height:9.475px;background:#3b3a32;"></div>
<div style="position:absolute;left:433.9px;top:260.61249999999995px;width:1px;height:9.475px;background:#3b3a32;"></div>
<div style="position:absolute;left:451.5px;top:260.61249999999995px;width:1px;height:9.475px;background:#3b3a32;"></div>
<div style="position:absolute;left:398.7px;top:270.0875px;width:1px;height:9.475px;background:#3b3a32;"></div>
<div style="position:absolute;left:416.3px;top:270.0875px;width:1px;height:9.475px;background:#3b3a32;"></div>
<div style="position:absolute;left:433.9px;top:270.0875px;width:1px;height:9.475px;background:#3b3a32;"></div>
<div style="position:absolute;left:398.7px;top:279.56249999999994px;width:1px;height:9.475px;background:#3b3a32;"></div>
<div style="position:absolute;left:416.3px;top:279.56249999999994px;width:1px;height:9.475px;background:#3b3a32;"></div>
<div style="position:absolute;left:433.9px;top:279.56249999999994px;width:1px;height:9.475px;background:#3b3a32;"></div>
<div style="position:absolute;left:398.7px;top:289.03749999999997px;width:1px;height:9.475px;background:#3b3a32;"></div>
<div style="position:absolute;left:416.3px;top:289.03749999999997px;width:1px;height:9.475px;background:#3b3a32;"></div>
<div style="position:absolute;left:433.9px;top:289.03749999999997px;width:1px;height:9.475px;background:#3b3a32;"></div>
<div style="position:absolute;left:398.7px;top:298.5125px;width:1px;height:9.475px;background:#3b3a32;"></div>
<div style="position:absolute;left:416.3px;top:298.5125px;width:1px;height:9.475px;background:#3b3a32;"></div>
<div style="position:absolute;left:433.9px;top:298.5125px;width:1px;height:9.475px;background:#3b3a32;"></div>
<div style="position:absolute;left:398.7px;top:307.98749999999995px;width:1px;height:9.475px;background:#3b3a32;"></div>
<div style="position:absolute;left:416.3px;top:307.98749999999995px;width:1px;height:9.475px;background:#3b3a32;"></div>
<div style="position:absolute;left:433.9px;top:307.98749999999995px;width:1px;height:9.475px;background:#3b3a32;"></div>
<div style="position:absolute;left:398.7px;top:317.4625px;width:1px;height:9.475px;background:#3b3a32;"></div>
<div style="position:absolute;left:416.3px;top:317.4625px;width:1px;height:9.475px;background:#3b3a32;"></div>
<div style="position:absolute;left:433.9px;top:317.4625px;width:1px;height:9.475px;background:#3b3a32;"></div>
<div style="position:absolute;left:398.7px;top:326.93749999999994px;width:1px;height:9.475px;background:#3b3a32;"></div>
<div style="position:absolute;left:416.3px;top:326.93749999999994px;width:1px;height:9.475px;background:#3b3a32;"></div>
<div style="position:absolute;left:433.9px;top:326.93749999999994px;width:1px;height:9.475px;background:#3b3a32;"></div>
<div style="position:absolute;left:398.7px;top:336.41249999999997px;width:1px;height:9.475px;background:#3b3a32;"></div>
<div style="position:absolute;left:416.3px;top:336.41249999999997px;width:1px;height:9.475px;background:#3b3a32;"></div>
<div style="position:absolute;left:433.9px;top:336.41249999999997px;width:1px;height:9.475px;background:#3b3a32;"></div>
<div style="position:absolute;left:398.7px;top:345.88749999999993px;width:1px;height:9.475px;background:#3b3a32;"></div>
<div style="position:absolute;left:416.3px;top:345.88749999999993px;width:1px;height:9.475px;background:#3b3a32;"></div>
<div style="position:absolute;left:433.9px;top:345.88749999999993px;width:1px;height:9.475px;background:#3b3a32;"></div>
<div style="position:absolute;left:398.7px;top:355.36249999999995px;width:1px;height:9.475px;background:#3b3a32;"></div>
<div style="position:absolute;left:416.3px;top:355.36249999999995px;width:1px;height:9.475px;background:#3b3a32;"></div>
<div style="position:absolute;left:433.9px;top:355.36249999999995px;width:1px;height:9.475px;background:#3b3a32;"></div>
<div style="position:absolute;left:398.7px;top:364.8375px;width:1px;height:9.475px;background:#3b3a32;"></div>
<div style="position:absolute;left:416.3px;top:364.8375px;width:1px;height:9.475px;background:#3b3a32;"></div>
<div style="position:absolute;left:433.9px;top:364.8375px;width:1px;height:9.475px;background:#3b3a32;"></div>
<div style="position:absolute;left:398.7px;top:374.31249999999994px;width:1px;height:9.475px;background:#3b3a32;"></div>
<div style="position:absolute;left:416.3px;top:374.31249999999994px;width:1px;height:9.475px;background:#3b3a32;"></div>
<div style="position:absolute;left:433.9px;top:374.31249999999994px;width:1px;height:9.475px;background:#3b3a32;"></div>
<div style="position:absolute;left:398.7px;top:383.78749999999997px;width:1px;height:9.475px;background:#3b3a32;"></div>
<div style="position:absolute;left:416.3px;top:383.78749999999997px;width:1px;height:9.475px;background:#3b3a32;"></div>
<div style="position:absolute;left:398.7px;top:393.26249999999993px;width:1px;height:9.475px;background:#3b3a32;"></div>
<div style="position:absolute;left:416.3px;top:393.26249999999993px;width:1px;height:9.475px;background:#3b3a32;"></div>
<div style="position:absolute;left:398.7px;top:402.73749999999995px;width:1px;height:9.475px;background:#3b3a32;"></div>
<div style="position:absolute;left:416.3px;top:402.73749999999995px;width:1px;height:9.475px;background:#3b3a32;"></div>
<div style="position:absolute;left:398.7px;top:412.2125px;width:1px;height:9.475px;background:#3b3a32;"></div>
<div style="position:absolute;left:416.3px;top:412.2125px;width:1px;height:9.475px;background:#3b3a32;"></div>
<div style="position:absolute;left:433.9px;top:412.2125px;width:1px;height:9.475px;background:#3b3a32;"></div>
<div style="position:absolute;left:398.7px;top:421.68749999999994px;width:1px;height:9.475px;background:#3b3a32;"></div>
<div style="position:absolute;left:416.3px;top:421.68749999999994px;width:1px;height:9.475px;background:#3b3a32;"></div>
<div style="position:absolute;left:433.9px;top:421.68749999999994px;width:1px;height:9.475px;background:#3b3a32;"></div>
<div style="position:absolute;left:451.5px;top:421.68749999999994px;width:1px;height:9.475px;background:#3b3a32;"></div>
<div style="position:absolute;left:398.7px;top:431.16249999999997px;width:1px;height:9.475px;background:#3b3a32;"></div>
<div style="position:absolute;left:416.3px;top:431.16249999999997px;width:1px;height:9.475px;background:#3b3a32;"></div>
<div style="position:absolute;left:433.9px;top:431.16249999999997px;width:1px;height:9.475px;background:#3b3a32;"></div>
<div style="position:absolute;left:451.5px;top:431.16249999999997px;width:1px;height:9.475px;background:#3b3a32;"></div>
<div style="position:absolute;left:398.7px;top:440.63749999999993px;width:1px;height:9.475px;background:#3b3a32;"></div>
<div style="position:absolute;left:416.3px;top:440.63749999999993px;width:1px;height:9.475px;background:#3b3a32;"></div>
<div style="position:absolute;left:433.9px;top:440.63749999999993px;width:1px;height:9.475px;background:#3b3a32;"></div>
<div style="position:absolute;left:398.7px;top:450.11249999999995px;width:1px;height:9.475px;background:#3b3a32;"></div>
<div style="position:absolute;left:416.3px;top:450.11249999999995px;width:1px;height:9.475px;background:#3b3a32;"></div>
<div style="position:absolute;left:433.9px;top:450.11249999999995px;width:1px;height:9.475px;background:#3b3a32;"></div>
<div style="position:absolute;left:398.7px;top:459.5875px;width:1px;height:9.475px;background:#3b3a32;"></div>
<div style="position:absolute;left:416.3px;top:459.5875px;width:1px;height:9.475px;background:#3b3a32;"></div>
<div style="position:absolute;left:433.9px;top:459.5875px;width:1px;height:9.475px;background:#3b3a32;"></div>
<div style="position:absolute;left:451.5px;top:459.5875px;width:1px;height:9.475px;background:#3b3a32;"></div>
<div style="position:absolute;left:398.7px;top:469.06249999999994px;width:1px;height:9.475px;background:#3b3a32;"></div>
<div style="position:absolute;left:416.3px;top:469.06249999999994px;width:1px;height:9.475px;background:#3b3a32;"></div>
<div style="position:absolute;left:433.9px;top:469.06249999999994px;width:1px;height:9.475px;background:#3b3a32;"></div>
<div style="position:absolute;left:451.5px;top:469.06249999999994px;width:1px;height:9.475px;background:#3b3a32;"></div>
<div style="position:absolute;left:398.7px;top:478.53749999999997px;width:1px;height:9.475px;background:#3b3a32;"></div>
<div style="position:absolute;left:416.3px;top:478.53749999999997px;width:1px;height:9.475px;background:#3b3a32;"></div>
<div style="position:absolute;left:433.9px;top:478.53749999999997px;width:1px;height:9.475px;background:#3b3a32;"></div>
<div style="position:absolute;left:451.5px;top:478.53749999999997px;width:1px;height:9.475px;background:#3b3a32;"></div>
<div style="position:absolute;left:398.7px;top:488.01249999999993px;width:1px;height:9.475px;background:#3b3a32;"></div>
<div style="position:absolute;left:416.3px;top:488.01249999999993px;width:1px;height:9.475px;background:#3b3a32;"></div>
<div style="position:absolute;left:433.9px;top:488.01249999999993px;width:1px;height:9.475px;background:#3b3a32;"></div>
<div style="position:absolute;left:357.1px;top:44.4875px;width:25px;text-align:right;font-family:'Liberation Mono',monospace;font-size:7.33px;line-height:9.475px;color:#8f908a;white-space:pre;transform:scaleY(1.15);transform-origin:0 70%;will-change:transform;-webkit-text-stroke:0.15px currentColor;">460</div>
<div style="position:absolute;left:357.1px;top:53.9625px;width:25px;text-align:right;font-family:'Liberation Mono',monospace;font-size:7.33px;line-height:9.475px;color:#8f908a;white-space:pre;transform:scaleY(1.15);transform-origin:0 70%;will-change:transform;-webkit-text-stroke:0.15px currentColor;">461</div>
<div style="position:absolute;left:398.7px;top:53.9625px;font-family:'Liberation Mono',monospace;font-size:7.33px;line-height:9.475px;white-space:pre;transform:scaleY(1.15);transform-origin:0 70%;will-change:transform;-webkit-text-stroke:0.15px currentColor;"><span style="color:#f8f8f2;">    </span><span style="color:#66d9ef;font-style:italic;">function</span><span style="color:#f8f8f2;"> </span><span style="color:#a6e22e;">buildStateAndCountyMap</span><span style="color:#f8f8f2;">(</span><span style="color:#fd971f;font-style:italic;">container</span><span style="color:#f8f8f2;">,</span><span style="color:#fd971f;font-style:italic;">svg</span><span style="color:#f8f8f2;">){</span></div>
<div style="position:absolute;left:357.1px;top:63.4375px;width:25px;text-align:right;font-family:'Liberation Mono',monospace;font-size:7.33px;line-height:9.475px;color:#8f908a;white-space:pre;transform:scaleY(1.15);transform-origin:0 70%;will-change:transform;-webkit-text-stroke:0.15px currentColor;">462</div>
<div style="position:absolute;left:398.7px;top:63.4375px;font-family:'Liberation Mono',monospace;font-size:7.33px;line-height:9.475px;white-space:pre;transform:scaleY(1.15);transform-origin:0 70%;will-change:transform;-webkit-text-stroke:0.15px currentColor;"><span style="color:#f8f8f2;">        </span><span style="color:#66d9ef;font-style:italic;">var</span><span style="color:#f8f8f2;"> width,</span></div>
<div style="position:absolute;left:357.1px;top:72.9125px;width:25px;text-align:right;font-family:'Liberation Mono',monospace;font-size:7.33px;line-height:9.475px;color:#8f908a;white-space:pre;transform:scaleY(1.15);transform-origin:0 70%;will-change:transform;-webkit-text-stroke:0.15px currentColor;">463</div>
<div style="position:absolute;left:398.7px;top:72.9125px;font-family:'Liberation Mono',monospace;font-size:7.33px;line-height:9.475px;white-space:pre;transform:scaleY(1.15);transform-origin:0 70%;will-change:transform;-webkit-text-stroke:0.15px currentColor;"><span style="color:#f8f8f2;">            height </span><span style="color:#f92672;">=</span><span style="color:#f8f8f2;"> </span><span style="color:#ae81ff;">500</span><span style="color:#f8f8f2;">,</span></div>
<div style="position:absolute;left:357.1px;top:82.38749999999999px;width:25px;text-align:right;font-family:'Liberation Mono',monospace;font-size:7.33px;line-height:9.475px;color:#8f908a;white-space:pre;transform:scaleY(1.15);transform-origin:0 70%;will-change:transform;-webkit-text-stroke:0.15px currentColor;">464</div>
<div style="position:absolute;left:398.7px;top:82.38749999999999px;font-family:'Liberation Mono',monospace;font-size:7.33px;line-height:9.475px;white-space:pre;transform:scaleY(1.15);transform-origin:0 70%;will-change:transform;-webkit-text-stroke:0.15px currentColor;"><span style="color:#f8f8f2;">            centered;</span></div>
<div style="position:absolute;left:357.1px;top:91.8625px;width:25px;text-align:right;font-family:'Liberation Mono',monospace;font-size:7.33px;line-height:9.475px;color:#8f908a;white-space:pre;transform:scaleY(1.15);transform-origin:0 70%;will-change:transform;-webkit-text-stroke:0.15px currentColor;">465</div>
<div style="position:absolute;left:357.1px;top:101.3375px;width:25px;text-align:right;font-family:'Liberation Mono',monospace;font-size:7.33px;line-height:9.475px;color:#8f908a;white-space:pre;transform:scaleY(1.15);transform-origin:0 70%;will-change:transform;-webkit-text-stroke:0.15px currentColor;">466</div>
<div style="position:absolute;left:398.7px;top:101.3375px;font-family:'Liberation Mono',monospace;font-size:7.33px;line-height:9.475px;white-space:pre;transform:scaleY(1.15);transform-origin:0 70%;will-change:transform;-webkit-text-stroke:0.15px currentColor;"><span style="color:#f8f8f2;">        isMobile </span><span style="color:#f92672;">?</span><span style="color:#f8f8f2;"> width </span><span style="color:#f92672;">=</span><span style="color:#f8f8f2;"> </span><span style="color:#ae81ff;">600</span><span style="color:#f8f8f2;"> </span><span style="color:#f92672;">:</span><span style="color:#f8f8f2;"> width </span><span style="color:#f92672;">=</span><span style="color:#f8f8f2;"> </span><span style="color:#ae81ff;">975</span><span style="color:#f8f8f2;">;</span></div>
<div style="position:absolute;left:357.1px;top:110.8125px;width:25px;text-align:right;font-family:'Liberation Mono',monospace;font-size:7.33px;line-height:9.475px;color:#8f908a;white-space:pre;transform:scaleY(1.15);transform-origin:0 70%;will-change:transform;-webkit-text-stroke:0.15px currentColor;">467</div>
<div style="position:absolute;left:357.1px;top:120.2875px;width:25px;text-align:right;font-family:'Liberation Mono',monospace;font-size:7.33px;line-height:9.475px;color:#8f908a;white-space:pre;transform:scaleY(1.15);transform-origin:0 70%;will-change:transform;-webkit-text-stroke:0.15px currentColor;">468</div>
<div style="position:absolute;left:398.7px;top:120.2875px;font-family:'Liberation Mono',monospace;font-size:7.33px;line-height:9.475px;white-space:pre;transform:scaleY(1.15);transform-origin:0 70%;will-change:transform;-webkit-text-stroke:0.15px currentColor;"><span style="color:#f8f8f2;">        </span><span style="color:#66d9ef;font-style:italic;">const</span><span style="color:#f8f8f2;"> zoom </span><span style="color:#f92672;">=</span><span style="color:#f8f8f2;"> d3.</span><span style="color:#66d9ef;">zoom</span><span style="color:#f8f8f2;">()</span></div>
<div style="position:absolute;left:357.1px;top:129.7625px;width:25px;text-align:right;font-family:'Liberation Mono',monospace;font-size:7.33px;line-height:9.475px;color:#8f908a;white-space:pre;transform:scaleY(1.15);transform-origin:0 70%;will-change:transform;-webkit-text-stroke:0.15px currentColor;">469</div>
<div style="position:absolute;left:398.7px;top:129.7625px;font-family:'Liberation Mono',monospace;font-size:7.33px;line-height:9.475px;white-space:pre;transform:scaleY(1.15);transform-origin:0 70%;will-change:transform;-webkit-text-stroke:0.15px currentColor;"><span style="color:#f8f8f2;">            .</span><span style="color:#66d9ef;">scaleExtent</span><span style="color:#f8f8f2;">([</span><span style="color:#ae81ff;">1</span><span style="color:#f8f8f2;">, </span><span style="color:#ae81ff;">8</span><span style="color:#f8f8f2;">])</span></div>
<div style="position:absolute;left:357.1px;top:139.23749999999998px;width:25px;text-align:right;font-family:'Liberation Mono',monospace;font-size:7.33px;line-height:9.475px;color:#8f908a;white-space:pre;transform:scaleY(1.15);transform-origin:0 70%;will-change:transform;-webkit-text-stroke:0.15px currentColor;">470</div>
<div style="position:absolute;left:398.7px;top:139.23749999999998px;font-family:'Liberation Mono',monospace;font-size:7.33px;line-height:9.475px;white-space:pre;transform:scaleY(1.15);transform-origin:0 70%;will-change:transform;-webkit-text-stroke:0.15px currentColor;"><span style="color:#f8f8f2;">            .</span><span style="color:#66d9ef;">translateExtent</span><span style="color:#f8f8f2;">([[</span><span style="color:#ae81ff;">0</span><span style="color:#f8f8f2;">,</span><span style="color:#ae81ff;">0</span><span style="color:#f8f8f2;">],[width,</span><span style="color:#ae81ff;">500</span><span style="color:#f8f8f2;">]])</span></div>
<div style="position:absolute;left:357.1px;top:148.7125px;width:25px;text-align:right;font-family:'Liberation Mono',monospace;font-size:7.33px;line-height:9.475px;color:#8f908a;white-space:pre;transform:scaleY(1.15);transform-origin:0 70%;will-change:transform;-webkit-text-stroke:0.15px currentColor;">471</div>
<div style="position:absolute;left:398.7px;top:148.7125px;font-family:'Liberation Mono',monospace;font-size:7.33px;line-height:9.475px;white-space:pre;transform:scaleY(1.15);transform-origin:0 70%;will-change:transform;-webkit-text-stroke:0.15px currentColor;"><span style="color:#f8f8f2;">            .</span><span style="color:#66d9ef;">on</span><span style="color:#f8f8f2;">(</span><span style="color:#e6db74;">&#x27;zoom&#x27;</span><span style="color:#f8f8f2;">, zoomed);</span></div>
<div style="position:absolute;left:357.1px;top:158.1875px;width:25px;text-align:right;font-family:'Liberation Mono',monospace;font-size:7.33px;line-height:9.475px;color:#8f908a;white-space:pre;transform:scaleY(1.15);transform-origin:0 70%;will-change:transform;-webkit-text-stroke:0.15px currentColor;">472</div>
<div style="position:absolute;left:357.1px;top:167.6625px;width:25px;text-align:right;font-family:'Liberation Mono',monospace;font-size:7.33px;line-height:9.475px;color:#8f908a;white-space:pre;transform:scaleY(1.15);transform-origin:0 70%;will-change:transform;-webkit-text-stroke:0.15px currentColor;">473</div>
<div style="position:absolute;left:398.7px;top:167.6625px;font-family:'Liberation Mono',monospace;font-size:7.33px;line-height:9.475px;white-space:pre;transform:scaleY(1.15);transform-origin:0 70%;will-change:transform;-webkit-text-stroke:0.15px currentColor;"><span style="color:#f8f8f2;">        </span><span style="color:#66d9ef;font-style:italic;">function</span><span style="color:#f8f8f2;"> </span><span style="color:#a6e22e;">zoomed</span><span style="color:#f8f8f2;">() {</span></div>
<div style="position:absolute;left:357.1px;top:177.1375px;width:25px;text-align:right;font-family:'Liberation Mono',monospace;font-size:7.33px;line-height:9.475px;color:#8f908a;white-space:pre;transform:scaleY(1.15);transform-origin:0 70%;will-change:transform;-webkit-text-stroke:0.15px currentColor;">474</div>
<div style="position:absolute;left:398.7px;top:177.1375px;font-family:'Liberation Mono',monospace;font-size:7.33px;line-height:9.475px;white-space:pre;transform:scaleY(1.15);transform-origin:0 70%;will-change:transform;-webkit-text-stroke:0.15px currentColor;"><span style="color:#f8f8f2;">            svg</span></div>
<div style="position:absolute;left:357.1px;top:186.6125px;width:25px;text-align:right;font-family:'Liberation Mono',monospace;font-size:7.33px;line-height:9.475px;color:#c2c2bc;white-space:pre;transform:scaleY(1.15);transform-origin:0 70%;will-change:transform;-webkit-text-stroke:0.15px currentColor;">475</div>
<div style="position:absolute;left:398.7px;top:186.6125px;font-family:'Liberation Mono',monospace;font-size:7.33px;line-height:9.475px;white-space:pre;transform:scaleY(1.15);transform-origin:0 70%;will-change:transform;-webkit-text-stroke:0.15px currentColor;"><span style="color:#f8f8f2;">              .</span><span style="color:#66d9ef;">selectAll</span><span style="color:#f8f8f2;">(</span><span style="color:#e6db74;">&#x27;g&#x27;</span><span style="color:#f8f8f2;">)</span></div>
<div style="position:absolute;left:357.1px;top:196.0875px;width:25px;text-align:right;font-family:'Liberation Mono',monospace;font-size:7.33px;line-height:9.475px;color:#8f908a;white-space:pre;transform:scaleY(1.15);transform-origin:0 70%;will-change:transform;-webkit-text-stroke:0.15px currentColor;">476</div>
<div style="position:absolute;left:398.7px;top:196.0875px;font-family:'Liberation Mono',monospace;font-size:7.33px;line-height:9.475px;white-space:pre;transform:scaleY(1.15);transform-origin:0 70%;will-change:transform;-webkit-text-stroke:0.15px currentColor;"><span style="color:#f8f8f2;">              .</span><span style="color:#66d9ef;">attr</span><span style="color:#f8f8f2;">(</span><span style="color:#e6db74;">&#x27;transform&#x27;</span><span style="color:#f8f8f2;">, d3.event.transform);</span></div>
<div style="position:absolute;left:357.1px;top:205.5625px;width:25px;text-align:right;font-family:'Liberation Mono',monospace;font-size:7.33px;line-height:9.475px;color:#8f908a;white-space:pre;transform:scaleY(1.15);transform-origin:0 70%;will-change:transform;-webkit-text-stroke:0.15px currentColor;">477</div>
<div style="position:absolute;left:357.1px;top:215.0375px;width:25px;text-align:right;font-family:'Liberation Mono',monospace;font-size:7.33px;line-height:9.475px;color:#8f908a;white-space:pre;transform:scaleY(1.15);transform-origin:0 70%;will-change:transform;-webkit-text-stroke:0.15px currentColor;">478</div>
<div style="position:absolute;left:398.7px;top:215.0375px;font-family:'Liberation Mono',monospace;font-size:7.33px;line-height:9.475px;white-space:pre;transform:scaleY(1.15);transform-origin:0 70%;will-change:transform;-webkit-text-stroke:0.15px currentColor;"><span style="color:#f8f8f2;">            </span><span style="color:#66d9ef;">hideTooltip</span><span style="color:#f8f8f2;">(</span><span style="color:#e6db74;">&quot;yes&quot;</span><span style="color:#f8f8f2;">);</span></div>
<div style="position:absolute;left:357.1px;top:224.5125px;width:25px;text-align:right;font-family:'Liberation Mono',monospace;font-size:7.33px;line-height:9.475px;color:#8f908a;white-space:pre;transform:scaleY(1.15);transform-origin:0 70%;will-change:transform;-webkit-text-stroke:0.15px currentColor;">479</div>
<div style="position:absolute;left:398.7px;top:224.5125px;font-family:'Liberation Mono',monospace;font-size:7.33px;line-height:9.475px;white-space:pre;transform:scaleY(1.15);transform-origin:0 70%;will-change:transform;-webkit-text-stroke:0.15px currentColor;"><span style="color:#f8f8f2;">         }</span></div>
<div style="position:absolute;left:357.1px;top:233.9875px;width:25px;text-align:right;font-family:'Liberation Mono',monospace;font-size:7.33px;line-height:9.475px;color:#8f908a;white-space:pre;transform:scaleY(1.15);transform-origin:0 70%;will-change:transform;-webkit-text-stroke:0.15px currentColor;">480</div>
<div style="position:absolute;left:357.1px;top:243.4625px;width:25px;text-align:right;font-family:'Liberation Mono',monospace;font-size:7.33px;line-height:9.475px;color:#8f908a;white-space:pre;transform:scaleY(1.15);transform-origin:0 70%;will-change:transform;-webkit-text-stroke:0.15px currentColor;">481</div>
<div style="position:absolute;left:398.7px;top:243.4625px;font-family:'Liberation Mono',monospace;font-size:7.33px;line-height:9.475px;white-space:pre;transform:scaleY(1.15);transform-origin:0 70%;will-change:transform;-webkit-text-stroke:0.15px currentColor;"><span style="color:#f8f8f2;">        </span><span style="color:#66d9ef;font-style:italic;">function</span><span style="color:#f8f8f2;"> </span><span style="color:#a6e22e;">zoomControls</span><span style="color:#f8f8f2;">(</span><span style="color:#fd971f;font-style:italic;">container</span><span style="color:#f8f8f2;">,</span><span style="color:#fd971f;font-style:italic;">svg</span><span style="color:#f8f8f2;">){</span></div>
<div style="position:absolute;left:357.1px;top:252.9375px;width:25px;text-align:right;font-family:'Liberation Mono',monospace;font-size:7.33px;line-height:9.475px;color:#8f908a;white-space:pre;transform:scaleY(1.15);transform-origin:0 70%;will-change:transform;-webkit-text-stroke:0.15px currentColor;">482</div>
<div style="position:absolute;left:398.7px;top:252.9375px;font-family:'Liberation Mono',monospace;font-size:7.33px;line-height:9.475px;white-space:pre;transform:scaleY(1.15);transform-origin:0 70%;will-change:transform;-webkit-text-stroke:0.15px currentColor;"><span style="color:#f8f8f2;">          </span><span style="color:#66d9ef;font-style:italic;">let</span><span style="color:#f8f8f2;"> zoomIn </span><span style="color:#f92672;">=</span><span style="color:#f8f8f2;"> container.</span><span style="color:#66d9ef;">querySelector</span><span style="color:#f8f8f2;">(</span><span style="color:#e6db74;">`.wellbeing--map__zoomIn`</span><span style="color:#f8f8f2;">),</span></div>
<div style="position:absolute;left:357.1px;top:262.41249999999997px;width:25px;text-align:right;font-family:'Liberation Mono',monospace;font-size:7.33px;line-height:9.475px;color:#8f908a;white-space:pre;transform:scaleY(1.15);transform-origin:0 70%;will-change:transform;-webkit-text-stroke:0.15px currentColor;">483</div>
<div style="position:absolute;left:398.7px;top:262.41249999999997px;font-family:'Liberation Mono',monospace;font-size:7.33px;line-height:9.475px;white-space:pre;transform:scaleY(1.15);transform-origin:0 70%;will-change:transform;-webkit-text-stroke:0.15px currentColor;"><span style="color:#f8f8f2;">              zoomOut </span><span style="color:#f92672;">=</span><span style="color:#f8f8f2;"> container.</span><span style="color:#66d9ef;">querySelector</span><span style="color:#f8f8f2;">(</span><span style="color:#e6db74;">`.wellbeing--map__zoomOut`</span><span style="color:#f8f8f2;">);</span></div>
<div style="position:absolute;left:357.1px;top:271.8875px;width:25px;text-align:right;font-family:'Liberation Mono',monospace;font-size:7.33px;line-height:9.475px;color:#8f908a;white-space:pre;transform:scaleY(1.15);transform-origin:0 70%;will-change:transform;-webkit-text-stroke:0.15px currentColor;">484</div>
<div style="position:absolute;left:357.1px;top:281.36249999999995px;width:25px;text-align:right;font-family:'Liberation Mono',monospace;font-size:7.33px;line-height:9.475px;color:#8f908a;white-space:pre;transform:scaleY(1.15);transform-origin:0 70%;will-change:transform;-webkit-text-stroke:0.15px currentColor;">485</div>
<div style="position:absolute;left:398.7px;top:281.36249999999995px;font-family:'Liberation Mono',monospace;font-size:7.33px;line-height:9.475px;white-space:pre;transform:scaleY(1.15);transform-origin:0 70%;will-change:transform;-webkit-text-stroke:0.15px currentColor;"><span style="color:#f8f8f2;">          zoomIn.</span><span style="color:#66d9ef;">addEventListener</span><span style="color:#f8f8f2;">(</span><span style="color:#e6db74;">&quot;click&quot;</span><span style="color:#f8f8f2;">, </span><span style="color:#66d9ef;font-style:italic;">function</span><span style="color:#f8f8f2;">(</span><span style="color:#fd971f;font-style:italic;">e</span><span style="color:#f8f8f2;">){</span></div>
<div style="position:absolute;left:357.1px;top:290.8375px;width:25px;text-align:right;font-family:'Liberation Mono',monospace;font-size:7.33px;line-height:9.475px;color:#8f908a;white-space:pre;transform:scaleY(1.15);transform-origin:0 70%;will-change:transform;-webkit-text-stroke:0.15px currentColor;">486</div>
<div style="position:absolute;left:398.7px;top:290.8375px;font-family:'Liberation Mono',monospace;font-size:7.33px;line-height:9.475px;white-space:pre;transform:scaleY(1.15);transform-origin:0 70%;will-change:transform;-webkit-text-stroke:0.15px currentColor;"><span style="color:#f8f8f2;">            e.</span><span style="color:#66d9ef;">preventDefault</span><span style="color:#f8f8f2;">();</span></div>
<div style="position:absolute;left:357.1px;top:300.3125px;width:25px;text-align:right;font-family:'Liberation Mono',monospace;font-size:7.33px;line-height:9.475px;color:#8f908a;white-space:pre;transform:scaleY(1.15);transform-origin:0 70%;will-change:transform;-webkit-text-stroke:0.15px currentColor;">487</div>
<div style="position:absolute;left:398.7px;top:300.3125px;font-family:'Liberation Mono',monospace;font-size:7.33px;line-height:9.475px;white-space:pre;transform:scaleY(1.15);transform-origin:0 70%;will-change:transform;-webkit-text-stroke:0.15px currentColor;"><span style="color:#f8f8f2;">            zoom.</span><span style="color:#66d9ef;">scaleBy</span><span style="color:#f8f8f2;">(svg.</span><span style="color:#66d9ef;">transition</span><span style="color:#f8f8f2;">().</span><span style="color:#66d9ef;">duration</span><span style="color:#f8f8f2;">(</span><span style="color:#ae81ff;">250</span><span style="color:#f8f8f2;">), </span><span style="color:#ae81ff;">1.5</span><span style="color:#f8f8f2;">);</span></div>
<div style="position:absolute;left:357.1px;top:309.78749999999997px;width:25px;text-align:right;font-family:'Liberation Mono',monospace;font-size:7.33px;line-height:9.475px;color:#8f908a;white-space:pre;transform:scaleY(1.15);transform-origin:0 70%;will-change:transform;-webkit-text-stroke:0.15px currentColor;">488</div>
<div style="position:absolute;left:398.7px;top:309.78749999999997px;font-family:'Liberation Mono',monospace;font-size:7.33px;line-height:9.475px;white-space:pre;transform:scaleY(1.15);transform-origin:0 70%;will-change:transform;-webkit-text-stroke:0.15px currentColor;"><span style="color:#f8f8f2;">            </span><span style="color:#66d9ef;">analytics</span><span style="color:#f8f8f2;">(</span><span style="color:#e6db74;">&#x27;map_zoom&#x27;</span><span style="color:#f8f8f2;">, </span><span style="color:#e6db74;">&#x27;zoom_in&#x27;</span><span style="color:#f8f8f2;">);</span></div>
<div style="position:absolute;left:357.1px;top:319.2625px;width:25px;text-align:right;font-family:'Liberation Mono',monospace;font-size:7.33px;line-height:9.475px;color:#8f908a;white-space:pre;transform:scaleY(1.15);transform-origin:0 70%;will-change:transform;-webkit-text-stroke:0.15px currentColor;">489</div>
<div style="position:absolute;left:398.7px;top:319.2625px;font-family:'Liberation Mono',monospace;font-size:7.33px;line-height:9.475px;white-space:pre;transform:scaleY(1.15);transform-origin:0 70%;will-change:transform;-webkit-text-stroke:0.15px currentColor;"><span style="color:#f8f8f2;">          });</span></div>
<div style="position:absolute;left:357.1px;top:328.73749999999995px;width:25px;text-align:right;font-family:'Liberation Mono',monospace;font-size:7.33px;line-height:9.475px;color:#8f908a;white-space:pre;transform:scaleY(1.15);transform-origin:0 70%;will-change:transform;-webkit-text-stroke:0.15px currentColor;">490</div>
<div style="position:absolute;left:357.1px;top:338.2125px;width:25px;text-align:right;font-family:'Liberation Mono',monospace;font-size:7.33px;line-height:9.475px;color:#8f908a;white-space:pre;transform:scaleY(1.15);transform-origin:0 70%;will-change:transform;-webkit-text-stroke:0.15px currentColor;">491</div>
<div style="position:absolute;left:398.7px;top:338.2125px;font-family:'Liberation Mono',monospace;font-size:7.33px;line-height:9.475px;white-space:pre;transform:scaleY(1.15);transform-origin:0 70%;will-change:transform;-webkit-text-stroke:0.15px currentColor;"><span style="color:#f8f8f2;">          zoomOut.</span><span style="color:#66d9ef;">addEventListener</span><span style="color:#f8f8f2;">(</span><span style="color:#e6db74;">&quot;click&quot;</span><span style="color:#f8f8f2;">, </span><span style="color:#66d9ef;font-style:italic;">function</span><span style="color:#f8f8f2;">(</span><span style="color:#fd971f;font-style:italic;">e</span><span style="color:#f8f8f2;">){</span></div>
<div style="position:absolute;left:357.1px;top:347.68749999999994px;width:25px;text-align:right;font-family:'Liberation Mono',monospace;font-size:7.33px;line-height:9.475px;color:#8f908a;white-space:pre;transform:scaleY(1.15);transform-origin:0 70%;will-change:transform;-webkit-text-stroke:0.15px currentColor;">492</div>
<div style="position:absolute;left:398.7px;top:347.68749999999994px;font-family:'Liberation Mono',monospace;font-size:7.33px;line-height:9.475px;white-space:pre;transform:scaleY(1.15);transform-origin:0 70%;will-change:transform;-webkit-text-stroke:0.15px currentColor;"><span style="color:#f8f8f2;">            e.</span><span style="color:#66d9ef;">preventDefault</span><span style="color:#f8f8f2;">();</span></div>
<div style="position:absolute;left:357.1px;top:357.16249999999997px;width:25px;text-align:right;font-family:'Liberation Mono',monospace;font-size:7.33px;line-height:9.475px;color:#8f908a;white-space:pre;transform:scaleY(1.15);transform-origin:0 70%;will-change:transform;-webkit-text-stroke:0.15px currentColor;">493</div>
<div style="position:absolute;left:398.7px;top:357.16249999999997px;font-family:'Liberation Mono',monospace;font-size:7.33px;line-height:9.475px;white-space:pre;transform:scaleY(1.15);transform-origin:0 70%;will-change:transform;-webkit-text-stroke:0.15px currentColor;"><span style="color:#f8f8f2;">            zoom.</span><span style="color:#66d9ef;">scaleBy</span><span style="color:#f8f8f2;">(svg.</span><span style="color:#66d9ef;">transition</span><span style="color:#f8f8f2;">().</span><span style="color:#66d9ef;">duration</span><span style="color:#f8f8f2;">(</span><span style="color:#ae81ff;">250</span><span style="color:#f8f8f2;">), </span><span style="color:#ae81ff;">0.75</span><span style="color:#f8f8f2;">);</span></div>
<div style="position:absolute;left:357.1px;top:366.6375px;width:25px;text-align:right;font-family:'Liberation Mono',monospace;font-size:7.33px;line-height:9.475px;color:#8f908a;white-space:pre;transform:scaleY(1.15);transform-origin:0 70%;will-change:transform;-webkit-text-stroke:0.15px currentColor;">494</div>
<div style="position:absolute;left:398.7px;top:366.6375px;font-family:'Liberation Mono',monospace;font-size:7.33px;line-height:9.475px;white-space:pre;transform:scaleY(1.15);transform-origin:0 70%;will-change:transform;-webkit-text-stroke:0.15px currentColor;"><span style="color:#f8f8f2;">            </span><span style="color:#66d9ef;">analytics</span><span style="color:#f8f8f2;">(</span><span style="color:#e6db74;">&#x27;map_zoom&#x27;</span><span style="color:#f8f8f2;">, </span><span style="color:#e6db74;">&#x27;zoom_out&#x27;</span><span style="color:#f8f8f2;">);</span></div>
<div style="position:absolute;left:357.1px;top:376.11249999999995px;width:25px;text-align:right;font-family:'Liberation Mono',monospace;font-size:7.33px;line-height:9.475px;color:#8f908a;white-space:pre;transform:scaleY(1.15);transform-origin:0 70%;will-change:transform;-webkit-text-stroke:0.15px currentColor;">495</div>
<div style="position:absolute;left:398.7px;top:376.11249999999995px;font-family:'Liberation Mono',monospace;font-size:7.33px;line-height:9.475px;white-space:pre;transform:scaleY(1.15);transform-origin:0 70%;will-change:transform;-webkit-text-stroke:0.15px currentColor;"><span style="color:#f8f8f2;">          });</span></div>
<div style="position:absolute;left:357.1px;top:385.5875px;width:25px;text-align:right;font-family:'Liberation Mono',monospace;font-size:7.33px;line-height:9.475px;color:#8f908a;white-space:pre;transform:scaleY(1.15);transform-origin:0 70%;will-change:transform;-webkit-text-stroke:0.15px currentColor;">496</div>
<div style="position:absolute;left:398.7px;top:385.5875px;font-family:'Liberation Mono',monospace;font-size:7.33px;line-height:9.475px;white-space:pre;transform:scaleY(1.15);transform-origin:0 70%;will-change:transform;-webkit-text-stroke:0.15px currentColor;"><span style="color:#f8f8f2;">        }</span></div>
<div style="position:absolute;left:357.1px;top:395.06249999999994px;width:25px;text-align:right;font-family:'Liberation Mono',monospace;font-size:7.33px;line-height:9.475px;color:#8f908a;white-space:pre;transform:scaleY(1.15);transform-origin:0 70%;will-change:transform;-webkit-text-stroke:0.15px currentColor;">497</div>
<div style="position:absolute;left:357.1px;top:404.53749999999997px;width:25px;text-align:right;font-family:'Liberation Mono',monospace;font-size:7.33px;line-height:9.475px;color:#8f908a;white-space:pre;transform:scaleY(1.15);transform-origin:0 70%;will-change:transform;-webkit-text-stroke:0.15px currentColor;">498</div>
<div style="position:absolute;left:398.7px;top:404.53749999999997px;font-family:'Liberation Mono',monospace;font-size:7.33px;line-height:9.475px;white-space:pre;transform:scaleY(1.15);transform-origin:0 70%;will-change:transform;-webkit-text-stroke:0.15px currentColor;"><span style="color:#f8f8f2;">        d3.</span><span style="color:#66d9ef;">json</span><span style="color:#f8f8f2;">(stateURL, </span><span style="color:#66d9ef;font-style:italic;">function</span><span style="color:#f8f8f2;">(</span><span style="color:#fd971f;font-style:italic;">error</span><span style="color:#f8f8f2;">, </span><span style="color:#fd971f;font-style:italic;">us</span><span style="color:#f8f8f2;">) {</span></div>
<div style="position:absolute;left:357.1px;top:414.0125px;width:25px;text-align:right;font-family:'Liberation Mono',monospace;font-size:7.33px;line-height:9.475px;color:#8f908a;white-space:pre;transform:scaleY(1.15);transform-origin:0 70%;will-change:transform;-webkit-text-stroke:0.15px currentColor;">499</div>
<div style="position:absolute;left:398.7px;top:414.0125px;font-family:'Liberation Mono',monospace;font-size:7.33px;line-height:9.475px;white-space:pre;transform:scaleY(1.15);transform-origin:0 70%;will-change:transform;-webkit-text-stroke:0.15px currentColor;"><span style="color:#f8f8f2;">            svg</span></div>
<div style="position:absolute;left:357.1px;top:423.48749999999995px;width:25px;text-align:right;font-family:'Liberation Mono',monospace;font-size:7.33px;line-height:9.475px;color:#8f908a;white-space:pre;transform:scaleY(1.15);transform-origin:0 70%;will-change:transform;-webkit-text-stroke:0.15px currentColor;">500</div>
<div style="position:absolute;left:398.7px;top:423.48749999999995px;font-family:'Liberation Mono',monospace;font-size:7.33px;line-height:9.475px;white-space:pre;transform:scaleY(1.15);transform-origin:0 70%;will-change:transform;-webkit-text-stroke:0.15px currentColor;"><span style="color:#f8f8f2;">                .</span><span style="color:#66d9ef;">call</span><span style="color:#f8f8f2;">(zoom)</span></div>
<div style="position:absolute;left:357.1px;top:432.9625px;width:25px;text-align:right;font-family:'Liberation Mono',monospace;font-size:7.33px;line-height:9.475px;color:#8f908a;white-space:pre;transform:scaleY(1.15);transform-origin:0 70%;will-change:transform;-webkit-text-stroke:0.15px currentColor;">501</div>
<div style="position:absolute;left:398.7px;top:432.9625px;font-family:'Liberation Mono',monospace;font-size:7.33px;line-height:9.475px;white-space:pre;transform:scaleY(1.15);transform-origin:0 70%;will-change:transform;-webkit-text-stroke:0.15px currentColor;"><span style="color:#f8f8f2;">                .</span><span style="color:#66d9ef;">on</span><span style="color:#f8f8f2;">(</span><span style="color:#e6db74;">&quot;wheel.zoom&quot;</span><span style="color:#f8f8f2;">, </span><span style="color:#ae81ff;">null</span><span style="color:#f8f8f2;">);</span></div>
<div style="position:absolute;left:357.1px;top:442.43749999999994px;width:25px;text-align:right;font-family:'Liberation Mono',monospace;font-size:7.33px;line-height:9.475px;color:#8f908a;white-space:pre;transform:scaleY(1.15);transform-origin:0 70%;will-change:transform;-webkit-text-stroke:0.15px currentColor;">502</div>
<div style="position:absolute;left:357.1px;top:451.91249999999997px;width:25px;text-align:right;font-family:'Liberation Mono',monospace;font-size:7.33px;line-height:9.475px;color:#8f908a;white-space:pre;transform:scaleY(1.15);transform-origin:0 70%;will-change:transform;-webkit-text-stroke:0.15px currentColor;">503</div>
<div style="position:absolute;left:398.7px;top:451.91249999999997px;font-family:'Liberation Mono',monospace;font-size:7.33px;line-height:9.475px;white-space:pre;transform:scaleY(1.15);transform-origin:0 70%;will-change:transform;-webkit-text-stroke:0.15px currentColor;"><span style="color:#f8f8f2;">            svg</span></div>
<div style="position:absolute;left:357.1px;top:461.3875px;width:25px;text-align:right;font-family:'Liberation Mono',monospace;font-size:7.33px;line-height:9.475px;color:#8f908a;white-space:pre;transform:scaleY(1.15);transform-origin:0 70%;will-change:transform;-webkit-text-stroke:0.15px currentColor;">504</div>
<div style="position:absolute;left:398.7px;top:461.3875px;font-family:'Liberation Mono',monospace;font-size:7.33px;line-height:9.475px;white-space:pre;transform:scaleY(1.15);transform-origin:0 70%;will-change:transform;-webkit-text-stroke:0.15px currentColor;"><span style="color:#f8f8f2;">                .</span><span style="color:#66d9ef;">attr</span><span style="color:#f8f8f2;">(</span><span style="color:#e6db74;">&quot;viewBox&quot;</span><span style="color:#f8f8f2;">, </span><span style="color:#e6db74;">`0 0 ${width} 500`</span><span style="color:#f8f8f2;">)</span></div>
<div style="position:absolute;left:357.1px;top:470.86249999999995px;width:25px;text-align:right;font-family:'Liberation Mono',monospace;font-size:7.33px;line-height:9.475px;color:#8f908a;white-space:pre;transform:scaleY(1.15);transform-origin:0 70%;will-change:transform;-webkit-text-stroke:0.15px currentColor;">505</div>
<div style="position:absolute;left:398.7px;top:470.86249999999995px;font-family:'Liberation Mono',monospace;font-size:7.33px;line-height:9.475px;white-space:pre;transform:scaleY(1.15);transform-origin:0 70%;will-change:transform;-webkit-text-stroke:0.15px currentColor;"><span style="color:#f8f8f2;">                .</span><span style="color:#66d9ef;">attr</span><span style="color:#f8f8f2;">(</span><span style="color:#e6db74;">&quot;width&quot;</span><span style="color:#f8f8f2;">, </span><span style="color:#e6db74;">`100%`</span><span style="color:#f8f8f2;">)</span></div>
<div style="position:absolute;left:357.1px;top:480.3375px;width:25px;text-align:right;font-family:'Liberation Mono',monospace;font-size:7.33px;line-height:9.475px;color:#8f908a;white-space:pre;transform:scaleY(1.15);transform-origin:0 70%;will-change:transform;-webkit-text-stroke:0.15px currentColor;">506</div>
<div style="position:absolute;left:398.7px;top:480.3375px;font-family:'Liberation Mono',monospace;font-size:7.33px;line-height:9.475px;white-space:pre;transform:scaleY(1.15);transform-origin:0 70%;will-change:transform;-webkit-text-stroke:0.15px currentColor;"><span style="color:#f8f8f2;">                .</span><span style="color:#66d9ef;">attr</span><span style="color:#f8f8f2;">(</span><span style="color:#e6db74;">&quot;height&quot;</span><span style="color:#f8f8f2;">, </span><span style="color:#e6db74;">&quot;500px&quot;</span><span style="color:#f8f8f2;">);</span></div>
<div style="position:absolute;left:357.1px;top:489.81249999999994px;width:25px;text-align:right;font-family:'Liberation Mono',monospace;font-size:7.33px;line-height:9.475px;color:#8f908a;white-space:pre;transform:scaleY(1.15);transform-origin:0 70%;will-change:transform;-webkit-text-stroke:0.15px currentColor;">507</div>
<div style="position:absolute;left:526.0999999999999px;top:184.95000000000002px;width:0.9px;height:9px;background:#f8f8f0;"></div>
<div style="position:absolute;left:504.6px;top:193.75px;width:3.8000000000000003px;height:0.8px;background:#d8d8d0;"></div>
<div style="position:absolute;left:522.1999999999999px;top:193.75px;width:4.6000000000000005px;height:0.8px;background:#d8d8d0;"></div>
<div style="position:absolute;left:358px;top:24.5px;width:442px;height:21.8px;background:#6b6c67;"></div>
<svg style="position:absolute;left:364px;top:32.5px" width="16" height="8" viewBox="0 0 16 8"><path d="M6 0.5 L1 4 L6 7.5 Z" fill="#b9b9b6"/><path d="M10 0.5 L15 4 L10 7.5 Z" fill="#b9b9b6"/></svg>
<svg style="position:absolute;left:385px;top:28px" width="110" height="19" viewBox="0 0 110 19"><path d="M1 19 L9.5 0 H101 L109 19 Z" fill="#272822"/></svg>
<div style="position:absolute;left:400px;top:31.8px;white-space:pre;font-family:'Liberation Sans',sans-serif;font-size:7.3px;line-height:10px;color:#f0f0f0;">dev.js</div>
<div style="position:absolute;left:475.2px;top:35.2px;width:3.6px;height:3.6px;border-radius:50%;background:#8f8f8c;"></div>
<div style="position:absolute;left:359.5px;top:502px;width:262px;height:4.5px;background:#585954;border-radius:2px;"></div>
<div style="position:absolute;left:243px;top:508.2px;width:557px;height:13px;background:linear-gradient(#bcc1c8,#b1b7bf);border-top:1px solid #a3a8ae;box-sizing:border-box;"></div>
<svg style="position:absolute;left:250px;top:510px" width="11" height="9" viewBox="0 0 11 9"><rect x="0.5" y="0.5" width="10" height="8" rx="1" fill="#c9cdd3" stroke="#7f8389" stroke-width="0.8"/><rect x="0.5" y="6.5" width="10" height="2" fill="#7f8389"/></svg>
<div style="position:absolute;left:267.5px;top:510px;white-space:pre;font-family:'Liberation Sans',sans-serif;font-size:7.4px;line-height:10px;color:#3a3c40;">Line 475, Column 30</div></body></html>
